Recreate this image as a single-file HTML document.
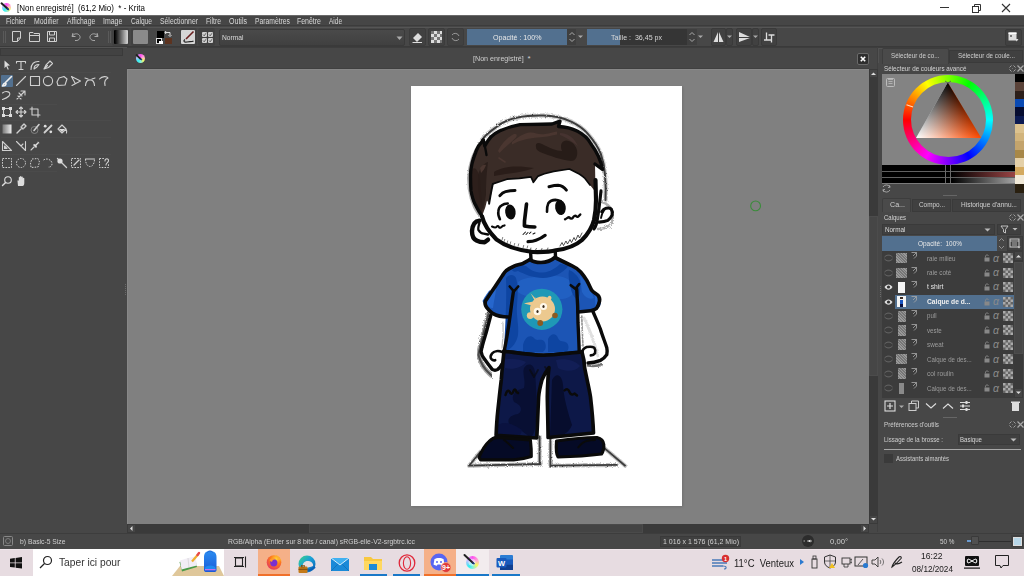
<!DOCTYPE html><html><head><meta charset="utf-8"><style>
html,body{margin:0;padding:0;width:1024px;height:576px;overflow:hidden;background:#474747;font-family:"Liberation Sans", sans-serif;position:relative}
</style></head><body>
<div style="position:absolute;left:0px;top:0px;width:1024px;height:15px;background:#ffffff;"></div><div style="position:absolute;left:1.8px;top:2.8px;width:9.4px;height:9.4px;border-radius:50%;background:conic-gradient(from 0deg,#ff50f0 0deg,#ffb0d0 70deg,#f8f860 120deg,#80f0e0 180deg,#30f0f0 220deg,#c0c0ff 290deg,#ff50f0 360deg)"></div><svg style="position:absolute;left:0px;top:0px;" width="14" height="15" viewBox="0 0 14 15"><path d="M1.5 3.3 L7.6 8.8" stroke="#222" stroke-width="2" stroke-linecap="round"/><path d="M7 8.3 L8.8 9.8" stroke="#1a3a8a" stroke-width="1.6"/></svg><div style="position:absolute;left:16.70px;top:3.79px;font-size:8.4px;line-height:1;color:#000;white-space:nowrap;transform-origin:0 0;transform:scaleX(0.951);">[Non enregistré]&nbsp;&nbsp;(61,2 Mio)&nbsp;&nbsp;* - Krita</div><div style="position:absolute;left:940px;top:7px;width:9px;height:1px;background:#333;"></div><svg style="position:absolute;left:971px;top:3px;" width="10" height="10" viewBox="0 0 10 10"><rect x="1.5" y="3.5" width="6" height="6" fill="none" stroke="#333" stroke-width="1"/><path d="M3.5 3.5 V1.5 H9.5 V7.5 H7.5" fill="none" stroke="#333" stroke-width="1"/></svg><svg style="position:absolute;left:1001px;top:3px;" width="10" height="10" viewBox="0 0 10 10"><path d="M1 1 L9 9 M9 1 L1 9" stroke="#333" stroke-width="1.1"/></svg><div style="position:absolute;left:0px;top:15px;width:1024px;height:1px;background:#6a6a6a;"></div><div style="position:absolute;left:0px;top:16px;width:1024px;height:11px;background:#464646;"></div><div style="position:absolute;left:0px;top:25.3px;width:1024px;height:1px;background:#3c3c3c;"></div><div style="position:absolute;left:5.80px;top:16.57px;font-size:8.3px;line-height:1;color:#d8d8d8;white-space:nowrap;transform-origin:0 0;transform:scaleX(0.803);">Fichier</div><div style="position:absolute;left:33.90px;top:16.57px;font-size:8.3px;line-height:1;color:#d8d8d8;white-space:nowrap;transform-origin:0 0;transform:scaleX(0.833);">Modifier</div><div style="position:absolute;left:66.80px;top:16.57px;font-size:8.3px;line-height:1;color:#d8d8d8;white-space:nowrap;transform-origin:0 0;transform:scaleX(0.818);">Affichage</div><div style="position:absolute;left:103.40px;top:16.57px;font-size:8.3px;line-height:1;color:#d8d8d8;white-space:nowrap;transform-origin:0 0;transform:scaleX(0.837);">Image</div><div style="position:absolute;left:131.00px;top:16.57px;font-size:8.3px;line-height:1;color:#d8d8d8;white-space:nowrap;transform-origin:0 0;transform:scaleX(0.798);">Calque</div><div style="position:absolute;left:160.00px;top:16.57px;font-size:8.3px;line-height:1;color:#d8d8d8;white-space:nowrap;transform-origin:0 0;transform:scaleX(0.824);">Sélectionner</div><div style="position:absolute;left:206.00px;top:16.57px;font-size:8.3px;line-height:1;color:#d8d8d8;white-space:nowrap;transform-origin:0 0;transform:scaleX(0.813);">Filtre</div><div style="position:absolute;left:229.00px;top:16.57px;font-size:8.3px;line-height:1;color:#d8d8d8;white-space:nowrap;transform-origin:0 0;transform:scaleX(0.848);">Outils</div><div style="position:absolute;left:255.00px;top:16.57px;font-size:8.3px;line-height:1;color:#d8d8d8;white-space:nowrap;transform-origin:0 0;transform:scaleX(0.816);">Paramètres</div><div style="position:absolute;left:297.00px;top:16.57px;font-size:8.3px;line-height:1;color:#d8d8d8;white-space:nowrap;transform-origin:0 0;transform:scaleX(0.839);">Fenêtre</div><div style="position:absolute;left:329.00px;top:16.57px;font-size:8.3px;line-height:1;color:#d8d8d8;white-space:nowrap;transform-origin:0 0;transform:scaleX(0.783);">Aide</div><div style="position:absolute;left:0px;top:27px;width:1024px;height:20px;background:#474747;"></div><div style="position:absolute;left:0px;top:27px;width:1024px;height:1px;background:#555555;"></div><div style="position:absolute;left:0px;top:46px;width:1024px;height:1px;background:#3a3a3a;"></div><div style="position:absolute;left:3px;top:31px;width:1px;height:12px;background:#5a5a5a;"></div><div style="position:absolute;left:5px;top:31px;width:1px;height:12px;background:#5a5a5a;"></div><div style="position:absolute;left:108px;top:31px;width:1px;height:12px;background:#5a5a5a;"></div><div style="position:absolute;left:110px;top:31px;width:1px;height:12px;background:#5a5a5a;"></div><svg style="position:absolute;left:11px;top:30px;" width="12" height="13" viewBox="0 0 12 13"><path d="M1.5 1.5 H9.5 V8 L6.5 11.5 H1.5 Z M9.5 8 H6.5 V11.5" fill="none" stroke="#cfcfcf" stroke-width="1"/></svg><svg style="position:absolute;left:28px;top:30px;" width="13" height="13" viewBox="0 0 13 13"><path d="M1.5 2.5 H5 L6 3.5 H11.5 V11.5 H1.5 Z M1.5 5.5 H11.5" fill="none" stroke="#cfcfcf" stroke-width="1"/></svg><svg style="position:absolute;left:46px;top:30px;" width="12" height="13" viewBox="0 0 12 13"><path d="M1.5 1.5 H10.5 V11.5 H1.5 Z M3.5 1.5 V5 H8.5 V1.5 M3.5 11.5 V8 H8.5 V11.5" fill="none" stroke="#cfcfcf" stroke-width="1"/></svg><svg style="position:absolute;left:70px;top:30px;" width="12" height="13" viewBox="0 0 12 13"><path d="M3 3 L2 6.5 L5.5 6.5 M2.5 6 C4 3 9 3 10 6.5 C10.5 9 8 11 5 10.5" fill="none" stroke="#aaa" stroke-width="1"/></svg><svg style="position:absolute;left:88px;top:30px;" width="12" height="13" viewBox="0 0 12 13"><path d="M9 3 L10 6.5 L6.5 6.5 M9.5 6 C8 3 3 3 2 6.5 C1.5 9 4 11 7 10.5" fill="none" stroke="#aaa" stroke-width="1"/></svg><div style="position:absolute;left:112px;top:28px;width:17px;height:18px;background:#414141;border-radius:2px"></div><div style="position:absolute;left:131px;top:28px;width:17px;height:18px;background:#414141;border-radius:2px"></div><div style="position:absolute;left:180px;top:28px;width:17px;height:18px;background:#414141;border-radius:2px"></div><div style="position:absolute;left:198px;top:28px;width:17px;height:18px;background:#414141;border-radius:2px"></div><div style="position:absolute;left:114px;top:30px;width:14px;height:14px;background:linear-gradient(90deg,#000 5%,#cfcfcf 95%);border-radius:1px"></div><div style="position:absolute;left:133px;top:30px;width:14.5px;height:14px;background:#8a8a8a;border-radius:1px"></div><div style="position:absolute;left:157px;top:30.5px;width:7px;height:7px;background:#000;"></div><div style="position:absolute;left:165px;top:37.7px;width:7px;height:6.5px;background:#5c3320;"></div><svg style="position:absolute;left:164px;top:30px;" width="9" height="8" viewBox="0 0 9 8"><path d="M2 1 L1 2.5 L2 4 M1 2.5 H6 V5 M4.5 5 L6 6.5 L7.5 5" fill="none" stroke="#ddd" stroke-width="1"/></svg><div style="position:absolute;left:157px;top:39px;width:4px;height:4px;background:#000;outline:1px solid #ddd"></div><div style="position:absolute;left:159px;top:41px;width:4px;height:3px;background:#fff;"></div><div style="position:absolute;left:181px;top:30px;width:14px;height:14px;background:#d6d6d6;border-radius:1px"></div><svg style="position:absolute;left:181px;top:30px;" width="14" height="14" viewBox="0 0 14 14"><path d="M12.5 1.5 L5 9" stroke="#6a2020" stroke-width="1.6"/><path d="M4 9.5 C2 11 3 12.5 6 12 C9 11.5 11 12 12.5 11" fill="none" stroke="#222" stroke-width="1.2"/></svg><div style="position:absolute;left:201.5px;top:31.5px;width:5px;height:5px;background:#cfcfcf;border-radius:1px"></div><svg style="position:absolute;left:201.5px;top:31.5px;" width="5" height="5" viewBox="0 0 5 5"><path d="M1 2.5 L2.2 3.8 L4 1.2" fill="none" stroke="#444" stroke-width="0.8"/></svg><div style="position:absolute;left:207.5px;top:31.5px;width:5px;height:5px;background:#cfcfcf;border-radius:1px"></div><svg style="position:absolute;left:207.5px;top:31.5px;" width="5" height="5" viewBox="0 0 5 5"><path d="M1 2.5 L2.2 3.8 L4 1.2" fill="none" stroke="#444" stroke-width="0.8"/></svg><div style="position:absolute;left:201.5px;top:37.5px;width:5px;height:5px;background:#cfcfcf;border-radius:1px"></div><svg style="position:absolute;left:201.5px;top:37.5px;" width="5" height="5" viewBox="0 0 5 5"><path d="M1 2.5 L2.2 3.8 L4 1.2" fill="none" stroke="#444" stroke-width="0.8"/></svg><div style="position:absolute;left:207.5px;top:37.5px;width:5px;height:5px;background:#cfcfcf;border-radius:1px"></div><svg style="position:absolute;left:207.5px;top:37.5px;" width="5" height="5" viewBox="0 0 5 5"><path d="M1 2.5 L2.2 3.8 L4 1.2" fill="none" stroke="#444" stroke-width="0.8"/></svg><div style="position:absolute;left:219.4px;top:29px;width:186px;height:17px;background:linear-gradient(#4a4a4a,#404040);border:1px solid #3a3a3a;box-sizing:border-box;border-radius:2px"></div><div style="position:absolute;left:221.50px;top:34.17px;font-size:7.6px;line-height:1;color:#dcdcdc;white-space:nowrap;transform-origin:0 0;transform:scaleX(0.878);">Normal</div><svg style="position:absolute;left:395.5px;top:35.5px;" width="7" height="5" viewBox="0 0 7 5"><path d="M0.5 0.5 H6.5 L3.5 4 Z" fill="#aaa"/></svg><div style="position:absolute;left:409px;top:28px;width:17px;height:18px;background:#414141;border-radius:2px;border:1px solid #3c3c3c;box-sizing:border-box"></div><div style="position:absolute;left:428px;top:28px;width:17px;height:18px;background:#414141;border-radius:2px;border:1px solid #3c3c3c;box-sizing:border-box"></div><div style="position:absolute;left:447px;top:28px;width:17px;height:18px;background:#414141;border-radius:2px;border:1px solid #3c3c3c;box-sizing:border-box"></div><svg style="position:absolute;left:411px;top:31px;" width="13" height="12" viewBox="0 0 13 12"><path d="M2 7 L7 2 L11 6 L6 11 Z" fill="#ddd"/><path d="M1.5 11.5 H11" stroke="#ddd" stroke-width="1"/></svg><svg style="position:absolute;left:430px;top:30px;" width="13" height="14" viewBox="0 0 13 14"><rect x="1" y="1" width="11" height="12" fill="#ddd"/><rect x="1" y="1" width="3" height="3" fill="#777"/><rect x="7" y="1" width="3" height="3" fill="#777"/><rect x="4" y="4" width="3" height="3" fill="#777"/><rect x="10" y="4" width="2" height="3" fill="#777"/><rect x="1" y="7" width="3" height="3" fill="#777"/><rect x="7" y="7" width="3" height="3" fill="#777"/><rect x="4" y="10" width="3" height="3" fill="#777"/><rect x="10" y="10" width="2" height="3" fill="#777"/></svg><svg style="position:absolute;left:449px;top:31px;" width="13" height="12" viewBox="0 0 13 12"><path d="M3 4 A4 4 0 0 1 10 5 M10 8 A4 4 0 0 1 3 7" fill="none" stroke="#999" stroke-width="1"/></svg><div style="position:absolute;left:467px;top:29px;width:100px;height:16px;background:#52708f;"></div><div style="position:absolute;left:492.75px;top:34.00px;font-size:7.8px;line-height:1;color:#e8e8e8;white-space:nowrap;transform-origin:0 0;transform:scaleX(0.909);">Opacité : 100%</div><div style="position:absolute;left:567px;top:29px;width:9px;height:16px;background:#3f3f3f;"></div><svg style="position:absolute;left:568px;top:30px;" width="8" height="14" viewBox="0 0 8 14"><path d="M1.5 5 L4 2.5 L6.5 5 M1.5 9 L4 11.5 L6.5 9" fill="none" stroke="#aaa" stroke-width="1"/></svg><svg style="position:absolute;left:578px;top:35px;" width="5" height="4" viewBox="0 0 5 4"><path d="M0 0.5 H5 L2.5 3 Z" fill="#aaa"/></svg><div style="position:absolute;left:587px;top:29px;width:100px;height:16px;background:#353535;"></div><div style="position:absolute;left:587px;top:29px;width:33px;height:16px;background:#52708f;"></div><div style="position:absolute;left:610.80px;top:34.00px;font-size:7.8px;line-height:1;color:#d8d8d8;white-space:nowrap;transform-origin:0 0;transform:scaleX(0.905);">Taille :&nbsp; 36,45 px</div><div style="position:absolute;left:687px;top:29px;width:10px;height:16px;background:#3f3f3f;"></div><svg style="position:absolute;left:688px;top:30px;" width="8" height="14" viewBox="0 0 8 14"><path d="M1.5 5 L4 2.5 L6.5 5 M1.5 9 L4 11.5 L6.5 9" fill="none" stroke="#aaa" stroke-width="1"/></svg><svg style="position:absolute;left:698px;top:35px;" width="5" height="4" viewBox="0 0 5 4"><path d="M0 0.5 H5 L2.5 3 Z" fill="#aaa"/></svg><div style="position:absolute;left:711px;top:28px;width:15px;height:18px;background:#414141;border-radius:2px;border:1px solid #3a3a3a;box-sizing:border-box"></div><div style="position:absolute;left:726px;top:28px;width:7px;height:18px;background:#414141;border-radius:2px;border:1px solid #3a3a3a;box-sizing:border-box"></div><div style="position:absolute;left:736px;top:28px;width:16px;height:18px;background:#414141;border-radius:2px;border:1px solid #3a3a3a;box-sizing:border-box"></div><div style="position:absolute;left:752px;top:28px;width:7px;height:18px;background:#414141;border-radius:2px;border:1px solid #3a3a3a;box-sizing:border-box"></div><div style="position:absolute;left:761px;top:28px;width:16px;height:18px;background:#414141;border-radius:2px;border:1px solid #3a3a3a;box-sizing:border-box"></div><svg style="position:absolute;left:712px;top:30px;" width="13" height="14" viewBox="0 0 13 14"><path d="M6 2 L1.5 12 H6 Z M7 2 L11.5 12 H7 Z" fill="#ddd"/></svg><svg style="position:absolute;left:738px;top:30px;" width="13" height="14" viewBox="0 0 13 14"><path d="M1 2 L12 7 L1 7 Z M1 8 H12 L1 12 Z" fill="#ddd"/></svg><svg style="position:absolute;left:727px;top:35px;" width="5" height="4" viewBox="0 0 5 4"><path d="M0 0.5 H5 L2.5 3 Z" fill="#aaa"/></svg><svg style="position:absolute;left:753px;top:35px;" width="5" height="4" viewBox="0 0 5 4"><path d="M0 0.5 H5 L2.5 3 Z" fill="#aaa"/></svg><svg style="position:absolute;left:763px;top:30px;" width="13" height="14" viewBox="0 0 13 14"><path d="M3.5 2.5 V10 M1 10 H8.5 M5.5 5 H11.5 M8.5 5 V12.5" fill="none" stroke="#ddd" stroke-width="1.3"/></svg><div style="position:absolute;left:1005px;top:29px;width:17px;height:17px;background:#414141;border-radius:2px;border:1px solid #3a3a3a;box-sizing:border-box"></div><svg style="position:absolute;left:1008px;top:32px;" width="11" height="10" viewBox="0 0 11 10"><rect x="0.5" y="0.5" width="8" height="8" fill="#ddd"/><rect x="0.5" y="0.5" width="8" height="1.5" fill="#fff"/><rect x="2" y="3" width="2" height="2" fill="#777"/><path d="M7 7 L10.5 7 L8.7 9.5 Z" fill="#ddd"/></svg><div style="position:absolute;left:0px;top:47px;width:126px;height:485px;background:#474747;"></div><div style="position:absolute;left:0px;top:46.5px;width:1024px;height:1.5px;background:#545454;"></div><div style="position:absolute;left:0px;top:48px;width:123px;height:8px;background:#424242;border:1px solid #3a3a3a;box-sizing:border-box"></div><div style="position:absolute;left:1px;top:72px;width:110px;height:1px;background:#4b4b4b;"></div><div style="position:absolute;left:1px;top:104px;width:56px;height:1px;background:#4b4b4b;"></div><div style="position:absolute;left:1px;top:120px;width:110px;height:1px;background:#4b4b4b;"></div><div style="position:absolute;left:1px;top:137px;width:110px;height:1px;background:#4b4b4b;"></div><div style="position:absolute;left:1px;top:154px;width:110px;height:1px;background:#4b4b4b;"></div><div style="position:absolute;left:1px;top:171px;width:56px;height:1px;background:#4b4b4b;"></div><div style="position:absolute;left:1px;top:75px;width:12.4px;height:12px;background:#52708f;border-radius:1px"></div><svg style="position:absolute;left:0.8px;top:58.6px;" width="12" height="12" viewBox="0 0 12 12"><path d="M3.5 1.5 L9 6.5 L6.2 6.8 L7.8 10.2 L6.8 10.7 L5.2 7.3 L3.5 9.2 Z" fill="#ddd"/></svg><svg style="position:absolute;left:14.6px;top:58.6px;" width="12" height="12" viewBox="0 0 12 12"><path d="M1.5 2.5 H10.5 M6 2.5 V10.5 M4 10.5 H8 M1.5 2.5 V4 M10.5 2.5 V4" fill="none" stroke="#d0d0d0" stroke-width="1.1" stroke-linecap="round" stroke-linejoin="round"/></svg><svg style="position:absolute;left:28.5px;top:58.6px;" width="12" height="12" viewBox="0 0 12 12"><path d="M2 10.5 C2 5 5 2 10 2.5 M5 10 C5 7 7 5.5 10 5.5 L8 8 Z" fill="none" stroke="#d0d0d0" stroke-width="1.1" stroke-linecap="round" stroke-linejoin="round"/></svg><svg style="position:absolute;left:42.0px;top:58.6px;" width="12" height="12" viewBox="0 0 12 12"><path d="M2 10 L4 6 L8 2 L10.5 4.5 L6.5 8.5 Z M2 10 L5.5 6.5" fill="none" stroke="#d0d0d0" stroke-width="1.1" stroke-linecap="round" stroke-linejoin="round"/></svg><svg style="position:absolute;left:0.8px;top:75.0px;" width="12" height="12" viewBox="0 0 12 12"><path d="M10.5 1.5 L4.5 7.5 M4 8 C2 8.5 2 10.5 1.5 11 C3.5 11 5 10 5 8.5" fill="none" stroke="#eee" stroke-width="1.6" stroke-linecap="round" stroke-linejoin="round"/></svg><svg style="position:absolute;left:14.6px;top:75.0px;" width="12" height="12" viewBox="0 0 12 12"><path d="M1.5 10.5 L10.5 1.5" fill="none" stroke="#d0d0d0" stroke-width="1.1" stroke-linecap="round" stroke-linejoin="round"/></svg><svg style="position:absolute;left:28.5px;top:75.0px;" width="12" height="12" viewBox="0 0 12 12"><path d="M1.5 1.5 H10.5 V10.5 H1.5 Z" fill="none" stroke="#d0d0d0" stroke-width="1.1" stroke-linecap="round" stroke-linejoin="round"/></svg><svg style="position:absolute;left:42.0px;top:75.0px;" width="12" height="12" viewBox="0 0 12 12"><circle cx="6" cy="6" r="4.6" fill="none" stroke="#d0d0d0" stroke-width="1.1"/></svg><svg style="position:absolute;left:56.0px;top:75.0px;" width="12" height="12" viewBox="0 0 12 12"><path d="M3 3 L8 1.5 L11 4 L9 10 L2 10.5 L1 7 Z" fill="none" stroke="#d0d0d0" stroke-width="1.1" stroke-linecap="round" stroke-linejoin="round"/></svg><svg style="position:absolute;left:69.8px;top:75.0px;" width="12" height="12" viewBox="0 0 12 12"><path d="M1.5 1.5 L10.5 6 L2 10.5 M1.5 1.5 L5 8" fill="none" stroke="#d0d0d0" stroke-width="1.1" stroke-linecap="round" stroke-linejoin="round"/></svg><svg style="position:absolute;left:84.0px;top:75.0px;" width="12" height="12" viewBox="0 0 12 12"><path d="M1.5 10.5 C2 3 10 3 10.5 10.5 M1 3 L4 4 M11 3 L8 4" fill="none" stroke="#d0d0d0" stroke-width="1.1" stroke-linecap="round" stroke-linejoin="round"/></svg><svg style="position:absolute;left:98.0px;top:75.0px;" width="12" height="12" viewBox="0 0 12 12"><path d="M1.5 4 C4 1 9 1 10 3 C8 4 6 6 7 10 M7 10.5 L7 10" fill="none" stroke="#d0d0d0" stroke-width="1.1" stroke-linecap="round" stroke-linejoin="round"/></svg><svg style="position:absolute;left:0.8px;top:89.0px;" width="12" height="12" viewBox="0 0 12 12"><path d="M1.5 4 C5 1 11 3 8 7 C6 9 3 10 1.5 10.5" fill="none" stroke="#d0d0d0" stroke-width="1.1" stroke-linecap="round" stroke-linejoin="round"/></svg><svg style="position:absolute;left:14.6px;top:89.0px;" width="12" height="12" viewBox="0 0 12 12"><path d="M2 10 L10 2 M6 2 H10 V6 M4 4 L7 7 M3 7 L6 10" fill="none" stroke="#d0d0d0" stroke-width="1.1" stroke-linecap="round" stroke-linejoin="round"/></svg><svg style="position:absolute;left:0.8px;top:106.0px;" width="12" height="12" viewBox="0 0 12 12"><path d="M2.5 2.5 H9.5 V9.5 H2.5 Z" fill="none" stroke="#d0d0d0" stroke-width="1.1" stroke-linecap="round" stroke-linejoin="round"/><rect x="1" y="1" width="3" height="3" fill="#ddd"/><rect x="8" y="1" width="3" height="3" fill="#ddd"/><rect x="1" y="8" width="3" height="3" fill="#ddd"/><rect x="8" y="8" width="3" height="3" fill="#ddd"/></svg><svg style="position:absolute;left:14.6px;top:106.0px;" width="12" height="12" viewBox="0 0 12 12"><path d="M6 1 V11 M1 6 H11 M4.5 2.5 L6 1 L7.5 2.5 M4.5 9.5 L6 11 L7.5 9.5 M2.5 4.5 L1 6 L2.5 7.5 M9.5 4.5 L11 6 L9.5 7.5" fill="none" stroke="#d0d0d0" stroke-width="1.1" stroke-linecap="round" stroke-linejoin="round"/></svg><svg style="position:absolute;left:28.5px;top:106.0px;" width="12" height="12" viewBox="0 0 12 12"><path d="M3 1 V9 H11 M1 3 H9 V11" fill="none" stroke="#d0d0d0" stroke-width="1.1" stroke-linecap="round" stroke-linejoin="round"/></svg><svg style="position:absolute;left:0.8px;top:123.0px;" width="12" height="12" viewBox="0 0 12 12"><rect x="1.5" y="1.5" width="9" height="9" fill="url(#tg)"/><defs><linearGradient id="tg"><stop offset="0" stop-color="#777"/><stop offset="1" stop-color="#eee"/></linearGradient></defs></svg><svg style="position:absolute;left:14.6px;top:123.0px;" width="12" height="12" viewBox="0 0 12 12"><path d="M2 10 L7 5 M6 4 L8 6 M7 3 L9 1 L11 3 L9 5" fill="none" stroke="#d0d0d0" stroke-width="1.4" stroke-linecap="round" stroke-linejoin="round"/></svg><svg style="position:absolute;left:28.5px;top:123.0px;" width="12" height="12" viewBox="0 0 12 12"><circle cx="5.5" cy="7" r="3.5" fill="none" stroke="#888" stroke-width="0.9"/><path d="M10 1.5 L5 7.5" fill="none" stroke="#d0d0d0" stroke-width="1.6" stroke-linecap="round" stroke-linejoin="round"/></svg><svg style="position:absolute;left:42.0px;top:123.0px;" width="12" height="12" viewBox="0 0 12 12"><path d="M2.5 9.5 L9.5 2.5" fill="none" stroke="#d0d0d0" stroke-width="1.8" stroke-linecap="round" stroke-linejoin="round"/><circle cx="3.2" cy="3.2" r="1.4" fill="#ddd"/><circle cx="8.8" cy="8.8" r="1.4" fill="#ddd"/></svg><svg style="position:absolute;left:56.0px;top:123.0px;" width="12" height="12" viewBox="0 0 12 12"><path d="M2 6 L6 2 L10 6 L6 10 Z M10 6 C11 8 11 9 10.5 10" fill="none" stroke="#d0d0d0" stroke-width="1.1" stroke-linecap="round" stroke-linejoin="round"/><path d="M3 6 H9 L6 9 Z" fill="#ddd"/></svg><svg style="position:absolute;left:0.8px;top:140.0px;" width="12" height="12" viewBox="0 0 12 12"><path d="M1.5 10.5 L1.5 1.5 L10.5 10.5 Z M3.5 8.5 L3.5 6 L6 8.5 Z" fill="none" stroke="#d0d0d0" stroke-width="1.1" stroke-linecap="round" stroke-linejoin="round"/></svg><svg style="position:absolute;left:14.6px;top:140.0px;" width="12" height="12" viewBox="0 0 12 12"><path d="M1.5 1.5 L10.5 10.5 V1.5 M6 6 L8 4" fill="none" stroke="#d0d0d0" stroke-width="1.1" stroke-linecap="round" stroke-linejoin="round"/></svg><svg style="position:absolute;left:28.5px;top:140.0px;" width="12" height="12" viewBox="0 0 12 12"><path d="M2 10 L5 7" fill="none" stroke="#d0d0d0" stroke-width="1.1" stroke-linecap="round" stroke-linejoin="round"/><path d="M4 5 L7 8 L8 7 L7.5 5.5 L10 3 L11 3.5 L8.5 1 L9 2 L6.5 4.5 L5 4 Z" fill="#ddd"/></svg><svg style="position:absolute;left:0.8px;top:157.0px;" width="12" height="12" viewBox="0 0 12 12"><path d="M1.5 1.5 H10.5 V10.5 H1.5 Z" fill="none" stroke="#d0d0d0" stroke-width="1" stroke-dasharray="1.6 1.2"/></svg><svg style="position:absolute;left:14.6px;top:157.0px;" width="12" height="12" viewBox="0 0 12 12"><circle cx="6" cy="6" r="4.5" fill="none" stroke="#d0d0d0" stroke-width="1" stroke-dasharray="1.6 1.2"/></svg><svg style="position:absolute;left:28.5px;top:157.0px;" width="12" height="12" viewBox="0 0 12 12"><path d="M3 2 L9 1.5 L10.5 5 L9 10 L2 10.5 L1.5 6 Z" fill="none" stroke="#d0d0d0" stroke-width="1" stroke-dasharray="1.6 1.2"/></svg><svg style="position:absolute;left:42.0px;top:157.0px;" width="12" height="12" viewBox="0 0 12 12"><path d="M1.5 3 C4 1 9 2 10 6 C10.5 9 8 10.5 6 10" fill="none" stroke="#d0d0d0" stroke-width="1" stroke-dasharray="1.6 1.2"/></svg><svg style="position:absolute;left:56.0px;top:157.0px;" width="12" height="12" viewBox="0 0 12 12"><path d="M1.5 1.5 L10.5 10.5" fill="none" stroke="#d0d0d0" stroke-width="1.3" stroke-linecap="round" stroke-linejoin="round"/><circle cx="4" cy="4" r="2.6" fill="#ddd"/></svg><svg style="position:absolute;left:69.8px;top:157.0px;" width="12" height="12" viewBox="0 0 12 12"><path d="M1.5 1.5 H10.5 V10.5 H1.5 Z" fill="none" stroke="#d0d0d0" stroke-width="1" stroke-dasharray="1.6 1.2"/><path d="M4 8 L9 3" fill="none" stroke="#d0d0d0" stroke-width="1.3" stroke-linecap="round" stroke-linejoin="round"/></svg><svg style="position:absolute;left:84.0px;top:157.0px;" width="12" height="12" viewBox="0 0 12 12"><path d="M1.5 2 C1.5 12 10.5 12 10.5 2" fill="none" stroke="#d0d0d0" stroke-width="1" stroke-dasharray="1.6 1.2"/><path d="M1.5 2 H10.5" fill="none" stroke="#d0d0d0" stroke-width="1.1" stroke-linecap="round" stroke-linejoin="round"/></svg><svg style="position:absolute;left:98.0px;top:157.0px;" width="12" height="12" viewBox="0 0 12 12"><path d="M1.5 1.5 H7 M1.5 1.5 V10.5 H10.5 V7" fill="none" stroke="#d0d0d0" stroke-width="1" stroke-dasharray="1.6 1.2"/><path d="M7 4 C7 1 11 1 10.5 4 C10 6 8 6 8 8" fill="none" stroke="#d0d0d0" stroke-width="1.1" stroke-linecap="round" stroke-linejoin="round"/></svg><svg style="position:absolute;left:0.8px;top:174.7px;" width="12" height="12" viewBox="0 0 12 12"><circle cx="7" cy="5" r="3.3" fill="none" stroke="#ddd" stroke-width="1.1"/><path d="M4.6 7.4 L1.5 10.5" fill="none" stroke="#ddd" stroke-width="1.4" stroke-linecap="round" stroke-linejoin="round"/></svg><svg style="position:absolute;left:14.6px;top:174.7px;" width="12" height="12" viewBox="0 0 12 12"><path d="M3 11 L2.5 6 C2.3 5 3.5 4.8 3.8 6 V2.5 C3.8 1.5 5 1.5 5 2.5 V5 V1.8 C5 0.8 6.4 0.8 6.4 1.8 V5 V2.2 C6.4 1.2 7.8 1.2 7.8 2.2 V5.5 V3.5 C7.8 2.6 9.3 2.6 9.3 3.5 V8 C9.3 10 8.5 11 7.5 11 Z" fill="#ddd"/></svg><div style="position:absolute;left:127px;top:47px;width:751px;height:22px;background:#474747;"></div><div style="position:absolute;left:127px;top:47px;width:751px;height:1px;background:#3d3d3d;"></div><div style="position:absolute;left:877px;top:47px;width:0.8px;height:485px;background:#404040;"></div><div style="position:absolute;left:135.8px;top:53.7px;width:9px;height:9px;border-radius:50%;background:conic-gradient(from 0deg,#ff50f0 0deg,#ffb0d0 70deg,#f8f860 120deg,#80f0e0 180deg,#30f0f0 220deg,#c0c0ff 290deg,#ff50f0 360deg)"></div><svg style="position:absolute;left:130px;top:50px;" width="16" height="16" viewBox="0 0 16 16"><path d="M6.5 5 L10.5 8.8" stroke="#222" stroke-width="1.8" stroke-linecap="round"/><path d="M10.5 8.8 L12 10" stroke="#1a3a8a" stroke-width="1.4"/></svg><div style="position:absolute;left:472.70px;top:54.83px;font-size:8px;line-height:1;color:#cfcfcf;white-space:nowrap;transform-origin:0 0;transform:scaleX(0.893);">[Non enregistré]</div><div style="position:absolute;left:527.50px;top:54.83px;font-size:8px;line-height:1;color:#cfcfcf;white-space:nowrap;">*</div><div style="position:absolute;left:857px;top:53px;width:12px;height:12px;background:#2e2e2e;border:1px solid #6a6a6a;border-radius:2px;box-sizing:border-box"></div><svg style="position:absolute;left:857px;top:53px;" width="12" height="12" viewBox="0 0 12 12"><path d="M3.8 3.8 L8.2 8.2 M8.2 3.8 L3.8 8.2" stroke="#fff" stroke-width="1.6"/></svg><div style="position:absolute;left:127px;top:68px;width:742px;height:1px;background:#404040;"></div><div style="position:absolute;left:127px;top:69px;width:742px;height:454.5px;background:#808080;border-top:1px solid #888;border-left:1px solid #888;box-sizing:border-box"></div><div style="position:absolute;left:869px;top:69px;width:8.5px;height:454px;background:#3a3a3a;"></div><div style="position:absolute;left:869px;top:69px;width:8.5px;height:9px;background:#454545;border:1px solid #3a3a3a;box-sizing:border-box"></div><svg style="position:absolute;left:869px;top:69px;" width="9" height="9" viewBox="0 0 9 9"><path d="M2 6 L4.5 3.5 L7 6 Z" fill="#ddd"/></svg><div style="position:absolute;left:869px;top:515px;width:8.5px;height:8.5px;background:#454545;border:1px solid #3a3a3a;box-sizing:border-box"></div><svg style="position:absolute;left:869px;top:515px;" width="9" height="9" viewBox="0 0 9 9"><path d="M2 3 L4.5 5.5 L7 3 Z" fill="#ddd"/></svg><div style="position:absolute;left:869px;top:216px;width:8.5px;height:160px;background:#464646;border:1px solid #4c4c4c;box-sizing:border-box"></div><div style="position:absolute;left:127px;top:523.5px;width:742px;height:9px;background:#3a3a3a;"></div><div style="position:absolute;left:309px;top:523.5px;width:334px;height:9px;background:#444444;border:1px solid #4a4a4a;box-sizing:border-box"></div><div style="position:absolute;left:127px;top:523.5px;width:9px;height:9px;background:#454545;border:1px solid #3a3a3a;box-sizing:border-box"></div><svg style="position:absolute;left:127px;top:523.5px;" width="9" height="9" viewBox="0 0 9 9"><path d="M5.5 2 L3 4.5 L5.5 7 Z" fill="#ddd"/></svg><div style="position:absolute;left:860px;top:523.5px;width:9px;height:9px;background:#454545;border:1px solid #3a3a3a;box-sizing:border-box"></div><svg style="position:absolute;left:860px;top:523.5px;" width="9" height="9" viewBox="0 0 9 9"><path d="M3.5 2 L6 4.5 L3.5 7 Z" fill="#ddd"/></svg><div style="position:absolute;left:412px;top:87px;width:271px;height:420px;background:#707070;filter:blur(1px)"></div><div style="position:absolute;left:411px;top:86px;width:271px;height:420px;background:#ffffff;"></div><svg style="position:absolute;left:748px;top:198px;" width="16" height="16" viewBox="0 0 16 16"><circle cx="7.6" cy="7.9" r="4.9" fill="none" stroke="#3a8c3a" stroke-width="1.1"/></svg><svg style="position:absolute;left:411px;top:86px;" width="271" height="420" viewBox="411 86 271 420"><defs><filter id="rough" x="-5%" y="-5%" width="110%" height="110%"><feTurbulence type="fractalNoise" baseFrequency="0.8" numOctaves="2" seed="3"/><feDisplacementMap in="SourceGraphic" scale="2.2"/></filter><filter id="rough2" x="-5%" y="-5%" width="110%" height="110%"><feTurbulence type="fractalNoise" baseFrequency="1.6" numOctaves="1" seed="7"/><feDisplacementMap in="SourceGraphic" scale="4"/></filter></defs><g fill="none" stroke="#222" stroke-opacity="0.75" stroke-linecap="round" filter="url(#rough)"><path d="M482 140 C486 134 491 131 496.7 126.7 C503 122 510 119 517.6 117.6 C525 116 535 115.5 542 115.6 C555 115.4 563 118 571.7 121.9 C578 125 584 129 588.3 134.4 C594 141 598 147 600.8 153.8 C603 160 604.5 168 605 174.7 L605.7 188 L605.5 200" stroke-width="2" stroke-opacity="0.9"/><path d="M482 140 C486 134 491 131 496.7 126.7 C503 122 510 119 517.6 117.6 C525 116 535 115.5 542 115.6 C555 115.4 563 118 571.7 121.9 C578 125 584 129 588.3 134.4 C594 141 598 147 600.8 153.8 C603 160 604.5 168 605 174.7 L605.7 188 L605.5 200" stroke-width="4.5" stroke-opacity="0.25" stroke="#444" filter="url(#rough2)"/><path d="M481 142 C474 150 469 163 468 178 C468 195 472 206 479 216" stroke-width="2" stroke-opacity="0.35"/><path d="M601.7 202 C606 203 610 205 613 212 C613.5 218 612 222 610.4 224.7 C606 228 602 229 598 229" stroke-width="2.4" stroke-opacity="0.35" filter="url(#rough2)"/><path d="M488.5 314 C485.5 327 481 341 478.5 355 C480.5 363 485 370 491 375" stroke-width="2.2" stroke-opacity="0.7"/><path d="M488.5 314 C485.5 327 481 341 478.5 355 C480.5 363 485 370 491 375" stroke-width="5" stroke-opacity="0.4" stroke="#222" filter="url(#rough2)"/><path d="M503 322 C503.5 330 503 340 502 348" stroke-width="1.2" stroke-opacity="0.3"/><path d="M581.8 316 C582 326 582.5 336 583 346" stroke-width="1.6" stroke-opacity="0.5" stroke-dasharray="2 1.5"/><path d="M588 365.5 C593 367 598 366 602 364" stroke-width="2" stroke-opacity="0.5"/><path d="M588 365.5 C593 367 598 366 602 364" stroke-width="4.5" stroke-opacity="0.3" stroke="#333" filter="url(#rough2)"/><path d="M584 318 C590 330 595 345 598 356" stroke-width="3" stroke-opacity="0.12" filter="url(#rough2)"/><path d="M469 465.7 L540.4 464 M469 465.7 L480.6 451.6 M539.6 436.6 L539.6 464 M550.4 436.6 L550.4 466.5 M550.4 465.7 L616.8 464.9 M603.5 447.4 L625.1 465.7" stroke-width="1.8" stroke-opacity="0.85"/><path d="M469 465.7 L540.4 464 M469 465.7 L480.6 451.6 M539.6 436.6 L539.6 464 M550.4 436.6 L550.4 466.5 M550.4 465.7 L616.8 464.9 M603.5 447.4 L625.1 465.7" stroke-width="4" stroke-opacity="0.3" stroke="#333" filter="url(#rough2)"/></g><path d="M483.3 140.1 L484.8 145.8 C487 142 489 139 490.8 137 C494 134 497 132 500 130.7 C507 127.5 513 125.8 520 124.6 L542 124.3 L552 124 L560 121.2 L558.5 126.5 C572 127 585 133 591 144 C597 152 601 160 602.5 169.5 L595 164 L595.5 192 L590 185 L585 178.4 C582 176 580.5 174.5 578.75 173.75 L569.4 169 L553.75 171.4 L544.4 173.75 L538.1 176.1 L533.4 182.3 L531 176.9 L519.4 178.4 L506.9 179.2 L492.8 183.9 L491.2 194.4 L489.1 203.75 L487 200.6 L485.4 206.9 L482 216.3 C476 210 471 200 470.5 190 C470 180 471 170 472 163.5 C473 158 475 153 478 147 Z" fill="#3a2c27" stroke="none" stroke-width="0.00" stroke-linecap="round" stroke-linejoin="round" /><path d="M498 151 C501 144 507 138 513 134.5 C516.5 133 518 135 515.5 138 C511 142.5 505 147 499.5 153 Z" fill="#4a3630" stroke="none" stroke-width="0.00" stroke-linecap="round" stroke-linejoin="round" /><path d="M512 142 C518 137 524 133 530 132.5 C535 132 538 135 545 134 C550 133.5 553 132 557 131.5 L557 134.5 C550 136 545 137 538 137.5 C530 138 520 140 512 144.5 Z" fill="#4a3630" stroke="none" stroke-width="0.00" stroke-linecap="round" stroke-linejoin="round" /><path d="M499 158 L505 162" fill="none" stroke="#4a3630" stroke-width="1.56" stroke-linecap="round" stroke-linejoin="round" /><path d="M560 133 C568 133 574 138 578 146 C575 144 568 138 560 135 Z" fill="#463330" stroke="none" stroke-width="0.00" stroke-linecap="round" stroke-linejoin="round" /><path d="M478 175 C480 168 484 163 488 162 C487 170 486 180 486 195 C485 200 484 206 483 210 C479 200 477 188 478 175 Z" fill="#2b1f1b" stroke="none" stroke-width="0.00" stroke-linecap="round" stroke-linejoin="round" /><path d="M480 168 C482 165 484 164 486 165 C485 168 483 171 481 173 Z" fill="#4a3630" stroke="none" stroke-width="0.00" stroke-linecap="round" stroke-linejoin="round" /><path d="M536 147 C535 143 538 142 542 144 C550 148 556 151 562 151 C560 146 561 141 566 140.5 C571 140.5 575 144 577 150 C578 156 576 161 571 161 C562 160 550 156 540 152 C537 150.5 536 149 536 147 Z" fill="#271c18" stroke="none" stroke-width="0.00" stroke-linecap="round" stroke-linejoin="round" /><path d="M494 172 C505 165 520 166 534 168 C525 172 510 173 494 176 Z" fill="#2a1d19" stroke="none" stroke-width="0.00" stroke-linecap="round" stroke-linejoin="round" /><path d="M470 172 C474 165 478 168 480 180 C481 195 483 205 482 214 C476 205 471 190 470 172 Z" fill="#2a1d19" stroke="none" stroke-width="0.00" stroke-linecap="round" stroke-linejoin="round" opacity="0.8"/><path d="M483.3 140.1 L484.8 145.8 C487 142 489 139 490.8 137 C494 134 497 132 500 130.7 C507 127.5 513 125.8 520 124.6 L542 124.3 L552 124 L560 121.2 L558.5 126.5 C572 127 585 133 591 144 C597 152 601 160 602.5 169.5 L595 164" fill="none" stroke="#0a0a0a" stroke-width="3.38" stroke-linecap="round" stroke-linejoin="round" /><path d="M483.3 140.1 C481 143 479.5 145 478.5 146 C477 149 476 151 475.6 152.5 C474 156 473 160 472 163.5 C471 168 470.5 172 470.5 175 C470.5 182 470.6 186 471 191 C472 196 473 200 475 204 C477 208 479 212 481 214.5 L482 216.3" fill="none" stroke="#0a0a0a" stroke-width="3.38" stroke-linecap="round" stroke-linejoin="round" /><path d="M484.8 146 C485.5 149 486 152 486.5 155" fill="none" stroke="#0a0a0a" stroke-width="2.34" stroke-linecap="round" stroke-linejoin="round" /><path d="M492.8 183.9 L506.9 179.2 L519.4 178.4 L531 176.9 L533.4 182.3 L538.1 176.1 L544.4 173.75 L553.75 171.4 L569.4 169 L578.75 173.75 C580.5 174.5 582 176 585 178.4 L590 185" fill="none" stroke="#0a0a0a" stroke-width="1.69" stroke-linecap="round" stroke-linejoin="round" /><path d="M482 216.3 C484 225 489 232 496.7 239.7 C505 246 516 250 532.6 252 C545 252.3 552 251.5 556 250.3 C566 249 575 246.2 582 240 C588 234 592 228 594 220 C595.5 213 596 206 596 200 L595.5 180" fill="none" stroke="#0a0a0a" stroke-width="4.16" stroke-linecap="round" stroke-linejoin="round" /><path d="M601 190.8 C600 200 599 210 597.5 218 C597 223 596 226 594 229" fill="none" stroke="#0a0a0a" stroke-width="3.12" stroke-linecap="round" stroke-linejoin="round" /><path d="M492.8 183.9 C491.5 190 490 198 489.1 203.75" fill="none" stroke="#0a0a0a" stroke-width="1.95" stroke-linecap="round" stroke-linejoin="round" /><path d="M479.4 220.6 C475 221 472.5 225 472 231 C472 236 474 239.5 476.8 240.6 C479 242 482 242.3 484.6 242.3 L488 239.7" fill="none" stroke="#0a0a0a" stroke-width="4.42" stroke-linecap="round" stroke-linejoin="round" /><path d="M479.4 223.2 C478.5 226 478 229 478.5 230.2 C480 232.5 482 233.6 483.7 233.6 L488 234.5" fill="none" stroke="#0a0a0a" stroke-width="2.34" stroke-linecap="round" stroke-linejoin="round" /><path d="M601.7 211.7 C603 209.5 604.5 208.5 606 208.2 C608.5 207.8 610.5 208 611.25 209.1 C612.5 211 612.5 213 612.1 215.2 C611 217.5 609.5 219.5 607.8 220.4 C605 221.8 602 222 599.1 222.1" fill="none" stroke="#0a0a0a" stroke-width="3.12" stroke-linecap="round" stroke-linejoin="round" /><path d="M601 218 C601.5 215 602.5 212.5 604 210.5" fill="none" stroke="#0a0a0a" stroke-width="1.82" stroke-linecap="round" stroke-linejoin="round" /><path d="M499.9 195.7 C502 193 504 192 505.6 191.6 C509 190.8 512 190.5 515 190.5" fill="none" stroke="#0a0a0a" stroke-width="2.99" stroke-linecap="round" stroke-linejoin="round" /><path d="M549 186.7 C552 186 555 185.3 558 185.3 C561 185.5 564 187 566.4 190.1" fill="none" stroke="#0a0a0a" stroke-width="2.99" stroke-linecap="round" stroke-linejoin="round" /><path d="M499.9 219.2 C498.5 216 498 213.5 498.3 211.9 C498.5 208.5 499.5 206.5 501.5 205.6 C503.5 204 505.5 203.5 507.7 203.5" fill="none" stroke="#0a0a0a" stroke-width="2.60" stroke-linecap="round" stroke-linejoin="round" /><ellipse cx="510.4" cy="212" rx="5.2" ry="7.6" fill="#0a0a0a" transform="rotate(-8 510.6 212)"/><path d="M547 211.7 C547 208 547.5 205 548.3 203.3 C550 201 552.5 200 555.3 199.9 C557.5 200 559 200.5 560.8 201.25" fill="none" stroke="#0a0a0a" stroke-width="2.60" stroke-linecap="round" stroke-linejoin="round" /><ellipse cx="560.5" cy="207.5" rx="5.3" ry="7.6" fill="#0a0a0a" transform="rotate(-10 560.3 207.8)"/><path d="M526.5 204.1 C525.8 210 525 217 524.5 221 L524.4 225.9 C527 226.5 531 227 534.8 227" fill="none" stroke="#0a0a0a" stroke-width="3.64" stroke-linecap="round" stroke-linejoin="round" /><path d="M528 241.6 C531 241.5 534 241 536 240.2 C539.5 239 542.5 237.5 545.2 235.3" fill="none" stroke="#0a0a0a" stroke-width="3.12" stroke-linecap="round" stroke-linejoin="round" /><path d="M492 226.5 C494 227.5 495.5 228 496.5 227 C497.5 225.5 498.5 226 499 227.2 C500 228.3 501.5 227.5 502.5 226 L504.6 225.4" fill="none" stroke="#0a0a0a" stroke-width="2.08" stroke-linecap="round" stroke-linejoin="round" /><path d="M565 219.3 C567 218.5 568.5 216.5 569.5 217.5 C570.5 219 572 219 573 217.5 C574 215.5 575.5 215.3 576.5 216.5 C577.5 217.5 579 216 580.3 214.4" fill="none" stroke="#0a0a0a" stroke-width="2.34" stroke-linecap="round" stroke-linejoin="round" /><path d="M523 234.5 L525.5 232 M526 234.5 L528 232.5 M529.5 233.5 L531 232 M533 234 L535 233" fill="none" stroke="#0a0a0a" stroke-width="1.04" stroke-linecap="round" stroke-linejoin="round" /><g stroke="#222" stroke-width="0.8" stroke-opacity="0.7"><path d="M502 240 L502.8 237"/><path d="M504 242 L504.8 239"/><path d="M507 243.5 L507.8 240.5"/><path d="M510 244.5 L510.8 241.5"/><path d="M514 246 L514.8 243"/><path d="M518 246.5 L518.8 243.5"/><path d="M523 248 L523.8 245"/><path d="M527 248.5 L527.8 245.5"/></g><path d="M560 246 L562 242.5 L563.5 245.5 L566 241 L567.5 244 L570 239.5 L571.5 242.5 L574 237.5 L575.5 240.5 L578 235 L579.5 238 L582 233" fill="none" stroke="#222" stroke-width="0.98" stroke-linecap="round" stroke-linejoin="round" opacity="0.8"/><path d="M530 250 L531 248 M535 250.5 L536.5 248.5 M541 250.5 L542 248.5 M547 250 L548 248" fill="none" stroke="#222" stroke-width="1.04" stroke-linecap="round" stroke-linejoin="round" opacity="0.6"/><path d="M530.6 252.5 L531 259" fill="none" stroke="#0a0a0a" stroke-width="3.38" stroke-linecap="round" stroke-linejoin="round" /><path d="M555.3 251.5 L555.5 257" fill="none" stroke="#0a0a0a" stroke-width="3.38" stroke-linecap="round" stroke-linejoin="round" /><path d="M523 263.4 L530 259.5 C533 262 537 262.5 541 262.5 C547 262.5 552 260 556 258 C562 261 567 263.5 572.2 265.8 C576 267.5 578.5 269.5 580.7 271.9 C583 274.5 585 277.5 586.8 280.4 C588.5 283.5 590 287 591.6 290.1 C593.5 292.5 596 293.5 597.7 295 C599.5 297 600 299 599.5 301.1 C599 304 598 306.5 596.5 308.4 C594.5 310 592.5 310.6 590.4 310.8 L578.2 312 L580.5 352 C565 353 550 354 542 353.7 L503.9 351.9 L508.4 317 C502 317 497 316 492.6 313.4 C490 311.5 488 309.5 486.5 307.3 C485.2 305.5 484.8 303.5 485.3 301.2 C487.5 298 490 294 492.6 290.3 C496 285.5 499 280.5 502.3 275.7 C503.5 274 504.5 272 506 270.8 C508.5 269 511 267.5 514.5 266 C517 265 519.5 264.5 523 263.4 Z" fill="#1c55b5" stroke="none" stroke-width="0.00" stroke-linecap="round" stroke-linejoin="round" /><path d="M482.5 301 C485 296 488 292 490 290 L489 306 C486 306 483.5 304 482.5 301 Z" fill="#2060c4" stroke="none" stroke-width="0.00" stroke-linecap="round" stroke-linejoin="round" /><path d="M518 282 C525 276 540 277 555 276 C565 276 572 280 574 288 C574 296 568 300 555 299 C540 298 525 298 518 292 Z" fill="#2363c6" stroke="none" stroke-width="0.00" stroke-linecap="round" stroke-linejoin="round" opacity="0.8"/><path d="M580 276 C586 282 591 290 594 298 C590 300 585 298 582 292 Z" fill="#2363c6" stroke="none" stroke-width="0.00" stroke-linecap="round" stroke-linejoin="round" /><path d="M512 270 C518 266 522 265 526 266 C530 270 536 273 543 272.5 C550 272 556 268 560 264 C563 264 566 265 568 266.5 C563 273 553 278 543 278 C533 278 524 274 518 271 C515 272 513 272 512 270 Z" fill="#0e45a2" stroke="none" stroke-width="0.00" stroke-linecap="round" stroke-linejoin="round" /><path d="M506 278 C509 274 514 274 516 278 C518 285 518 295 517 305 C516 315 519 325 518 335 C517 342 512 348 508 350 L504 350 C505 330 507 300 506 278 Z" fill="#0e45a2" stroke="none" stroke-width="0.00" stroke-linecap="round" stroke-linejoin="round" /><path d="M523 345 C525 337 530 334 534 338 C537 342 540 338 544 341 C547 345 546 350 543 352 L523 352 Z" fill="#0e45a2" stroke="none" stroke-width="0.00" stroke-linecap="round" stroke-linejoin="round" /><path d="M548 339 C551 333 556 333 558 338 C560 343 564 340 567 343 C570 347 568 351 566 352 L548 352 Z" fill="#0e45a2" stroke="none" stroke-width="0.00" stroke-linecap="round" stroke-linejoin="round" /><path d="M569 270 C574 272 578 276 580 281 C581 288 580 295 578 300 C574 298 571 292 570 285 C569 280 568 275 569 270 Z" fill="#0e45a2" stroke="none" stroke-width="0.00" stroke-linecap="round" stroke-linejoin="round" /><path d="M486 302 C489 292 494 286 497 283 C496 292 494 300 493 308 C490 308 487 306 486 302 Z" fill="#2666cc" stroke="none" stroke-width="0.00" stroke-linecap="round" stroke-linejoin="round" /><path d="M594 292 C598 296 601 299 601 303 C600 307 598 309 595 310 C596 304 595 298 594 292 Z" fill="#2666cc" stroke="none" stroke-width="0.00" stroke-linecap="round" stroke-linejoin="round" /><circle cx="541.8" cy="309.3" r="20.6" fill="#1f98b6"/><circle cx="542.5" cy="309" r="12.5" fill="#ecc98f"/><path d="M524 303.5 C529 302 534 301.5 537 302 L540 307 C535 306 529 305 524 303.5 Z" fill="#ecc98f" stroke="none" stroke-width="0.00" stroke-linecap="round" stroke-linejoin="round" /><path d="M530.5 293.3 C532 296 534 299 535.5 302.5 L538.5 302 C536 299 533 296 530.5 293.3 Z" fill="#ecc98f" stroke="none" stroke-width="0.00" stroke-linecap="round" stroke-linejoin="round" /><path d="M535 297.5 C536.5 299 538 300.5 539 302 L541 301 C539 299.5 537 298 535 297.5 Z" fill="#ecc98f" stroke="none" stroke-width="0.00" stroke-linecap="round" stroke-linejoin="round" /><path d="M547 299 C548 295 551 295 551.5 298 L550 303 Z" fill="#ecc98f" stroke="none" stroke-width="0.00" stroke-linecap="round" stroke-linejoin="round" /><circle cx="530.2" cy="315.6" r="3.4" fill="#ecc98f"/><circle cx="537.5" cy="311.5" r="3.8" fill="#fff8ea"/><circle cx="543.5" cy="306.5" r="3.6" fill="#fff8ea"/><ellipse cx="537.5" cy="311.5" rx="1.1" ry="1.6" fill="#3a2a1a"/><ellipse cx="543.5" cy="306.5" rx="1.1" ry="1.6" fill="#3a2a1a"/><circle cx="540.2" cy="323" r="2.9" fill="#8a5a22"/><circle cx="555" cy="315.5" r="2.8" fill="#8a5a22"/><path d="M530 259.5 C533 262 537 262.5 541 262.5 C547 262.5 552 260 555.5 257 M556 258 C562 261 567 263.5 572.2 265.8 C576 267.5 578.5 269.5 580.7 271.9 C583 274.5 585 277.5 586.8 280.4 C588.5 283.5 590 287 591.6 290.1 C593.5 292.5 596 293.5 597.7 295 C599.5 297 600 299 599.5 301.1 C599 304 598 306.5 596.5 308.4 C594.5 310 592.5 310.6 590.4 310.8 L578.2 312" fill="none" stroke="#0a0a0a" stroke-width="3.64" stroke-linecap="round" stroke-linejoin="round" /><path d="M530 259.5 L523 263.4 C519.5 264.5 517 265 514.5 266 C511 267.5 508.5 269 506 270.8 C504.5 272 503.5 274 502.3 275.7 C499 280.5 496 285.5 492.6 290.3 C490 294 487.5 298 485.3 301.2 C484.8 303.5 485.2 305.5 486.5 307.3 C488 309.5 490 311.5 492.6 313.4 C497 316 502 317 508.4 317" fill="none" stroke="#0a0a0a" stroke-width="3.64" stroke-linecap="round" stroke-linejoin="round" /><path d="M513.5 291.3 C512 300 511 310 509.5 320 C508 332 506 342 504 352" fill="none" stroke="#0a0a0a" stroke-width="3.38" stroke-linecap="round" stroke-linejoin="round" /><path d="M509.7 286.5 L513.9 291.3 L518.2 286.5" fill="none" stroke="#0a0a0a" stroke-width="2.60" stroke-linecap="round" stroke-linejoin="round" /><path d="M576.7 288.9 C577.5 300 578 312 578 322.9 C578.5 333 579 343 579.2 352" fill="none" stroke="#0a0a0a" stroke-width="3.38" stroke-linecap="round" stroke-linejoin="round" /><path d="M570.7 285.2 L575.5 288.9 L579.2 284" fill="none" stroke="#0a0a0a" stroke-width="2.60" stroke-linecap="round" stroke-linejoin="round" /><path d="M503.9 351.2 C515 352.5 530 355 543.4 355.3 C555 355 570 353 582 352" fill="none" stroke="#0a0a0a" stroke-width="3.64" stroke-linecap="round" stroke-linejoin="round" /><path d="M490.8 315.3 C489 322 487.5 328 486 333.3 C484 340 482 346 481.1 351.4 C481.5 354 482.5 356.5 483.9 358.3 C486.5 362 489.5 366 492.2 369.4 C494 370.5 496 370.5 497.8 369.4 C500 367.5 501.3 365.5 502 363.9" fill="none" stroke="#0a0a0a" stroke-width="3.38" stroke-linecap="round" stroke-linejoin="round" /><path d="M502.4 352.1 C498.5 350.5 494 351 492 353.5 C490.5 355.5 490.5 358 491.5 359.2 C492.5 360.3 494 360.6 495.2 360.2" fill="none" stroke="#0a0a0a" stroke-width="2.60" stroke-linecap="round" stroke-linejoin="round" /><path d="M592.5 310.5 C595.5 317.5 598.5 324 600.6 329.7 C602.5 336 605 342 606.8 347.8 C607.3 350 607.3 352.5 606.8 354.7 C605 357.5 603 359 600.6 360.3 C596 362 592 362.8 588 363" fill="none" stroke="#0a0a0a" stroke-width="3.38" stroke-linecap="round" stroke-linejoin="round" /><path d="M581.1 353.3 C582.5 350 584.5 347.8 586.7 347.1 C589.5 346.5 592.5 346.5 594.3 347.8 C595.5 349.5 595.5 351.5 595 353.3 C594 354.8 592.5 355.4 590.8 355.4" fill="none" stroke="#0a0a0a" stroke-width="2.60" stroke-linecap="round" stroke-linejoin="round" /><path d="M503.9 351.2 C515 352.5 530 355 543.4 355.3 C555 355 570 353 582 352 C583.5 357 584.5 362 584.6 367.6 C587 380 589.5 390 590.5 397 C592 410 593 420 593.5 433 L548.1 437.5 C548 425 547.5 410 547.3 397 C547.5 385 548 375 549 367.6 C545.5 372 543.5 376 542 379.7 C540 387 539 392 538.6 397 C538 410 537.5 425 536.8 438 L496.1 435.2 C496.5 425 497 418 497.8 410.9 C499 400 500 390 501.3 379.7 C502 370 503 360 503.9 351.9 Z" fill="#0d1848" stroke="none" stroke-width="0.00" stroke-linecap="round" stroke-linejoin="round" /><path d="M524 368 C528 362 534 364 535 372 C536 385 537 400 536 420 C535 430 534 436 530 437 C525 434 520 428 510 425 C506 420 510 415 518 414 C524 410 520 404 514 402 C510 395 516 390 524 388 C526 380 522 373 524 368 Z" fill="#080f33" stroke="none" stroke-width="0.00" stroke-linecap="round" stroke-linejoin="round" /><path d="M552 380 C556 372 562 374 563 385 C564 400 568 412 572 425 C568 435 560 437 550 436 Z" fill="#070d2d" stroke="none" stroke-width="0.00" stroke-linecap="round" stroke-linejoin="round" /><path d="M498 425 C505 420 515 425 522 430 L520 436 L497 435 Z" fill="#0a1240" stroke="none" stroke-width="0.00" stroke-linecap="round" stroke-linejoin="round" /><path d="M556 360 C565 358 575 360 580 366 C575 372 565 372 558 368 Z" fill="#14205a" stroke="none" stroke-width="0.00" stroke-linecap="round" stroke-linejoin="round" opacity="0.8"/><path d="M504 360 C510 358 520 359 526 362 C522 368 512 370 505 368 Z" fill="#14205a" stroke="none" stroke-width="0.00" stroke-linecap="round" stroke-linejoin="round" opacity="0.8"/><path d="M503.9 351.2 C515 352.5 530 355 543.4 355.3 C555 355 570 353 582 352 C583.5 357 584.5 362 584.6 367.6 C587 380 589.5 390 590.5 397 C592 410 593 420 593.5 433 L548.1 437.5 C548 425 547.5 410 547.3 397 C547.5 385 548 375 549 367.6 C545.5 372 543.5 376 542 379.7 C540 387 539 392 538.6 397 C538 410 537.5 425 536.8 438 L496.1 435.2 C496.5 425 497 418 497.8 410.9 C499 400 500 390 501.3 379.7 C502 370 503 360 503.9 351.9 Z" fill="none" stroke="#0a0a0a" stroke-width="3.64" stroke-linecap="round" stroke-linejoin="round" /><path d="M505.5 395 C506.5 391.5 508 389.5 509.5 391.5 C510.5 394.5 512.5 394.5 513.5 391 C514.5 388.5 516 389.5 516.5 392 L518 393 M564.5 390.5 C566.5 388.5 568.5 389 569.5 392 C570.5 394.5 572.5 395.5 574.5 393.5 L577 395.5" fill="none" stroke="#0a0a0a" stroke-width="2.47" stroke-linecap="round" stroke-linejoin="round" /><path d="M530 370 L534 377 L538 370 M545 367 L549 372" fill="none" stroke="#0a0a0a" stroke-width="1.82" stroke-linecap="round" stroke-linejoin="round" opacity="0.6"/><path d="M479 457.4 C482 450 485 445 488.9 441.6 C492 438.5 495 437.5 497.2 437.4 L530.4 439.9 C531 445 531.5 450 531.3 456.5 C525 458.5 520 459.5 513.8 459.9 L480.6 459.9 Z" fill="#050a26" stroke="#0a0a0a" stroke-width="3.12" stroke-linecap="round" stroke-linejoin="round" /><path d="M556.5 441 C570 439 585 437.5 597 437.5 C601 438.5 603.5 441 603.8 444.5 C604 448 603 452 601.5 454 C590 455.5 570 456.7 558 457 C556 454 556 448 556.5 441 Z" fill="#050a26" stroke="#0a0a0a" stroke-width="3.12" stroke-linecap="round" stroke-linejoin="round" /><path d="M504 440 C507 442 510 445 513 448 " fill="none" stroke="#0a0a0a" stroke-width="2.08" stroke-linecap="round" stroke-linejoin="round" /><path d="M578.3 447.3 C581 444 584 441.5 586.7 441 C589 440.3 592 440 595 440" fill="none" stroke="#0a0a0a" stroke-width="2.08" stroke-linecap="round" stroke-linejoin="round" /></svg><div style="position:absolute;left:878px;top:47px;width:146px;height:485px;background:#474747;"></div><div style="position:absolute;left:877.5px;top:48px;width:5px;height:15px;background:transparent;border:1px solid #525252;border-bottom:none;box-sizing:border-box"></div><div style="position:absolute;left:878px;top:47px;width:146px;height:1px;background:#3d3d3d;"></div><div style="position:absolute;left:882.2px;top:48.3px;width:66.4px;height:16px;background:#4a4a4a;border:1px solid #3d3d3d;border-bottom:none;border-radius:2px 2px 0 0;box-sizing:border-box"></div><div style="position:absolute;left:949px;top:50px;width:73.5px;height:12.8px;background:#404040;border:1px solid #3a3a3a;box-sizing:border-box"></div><div style="position:absolute;left:890.80px;top:52.07px;font-size:7.6px;line-height:1;color:#d0d0d0;white-space:nowrap;transform-origin:0 0;transform:scaleX(0.818);">Sélecteur de co...</div><div style="position:absolute;left:957.70px;top:52.07px;font-size:7.6px;line-height:1;color:#d0d0d0;white-space:nowrap;transform-origin:0 0;transform:scaleX(0.823);">Sélecteur de coule...</div><div style="position:absolute;left:883.80px;top:64.57px;font-size:7.6px;line-height:1;color:#d6d6d6;white-space:nowrap;transform-origin:0 0;transform:scaleX(0.824);">Sélecteur de couleurs avancé</div><svg style="position:absolute;left:1009px;top:65px;" width="15" height="7" viewBox="0 0 15 7"><path d="M0.5 2.5 L2.5 0.5 M4.5 0.5 L6.5 2.5 M0.5 4.5 L2.5 6.5 M6.5 4.5 L4.5 6.5" stroke="#a0a0a0" stroke-width="1"/><circle cx="3.5" cy="3.5" r="0.6" fill="#777"/><path d="M8.5 0.5 L14.5 6.5 M14.5 0.5 L8.5 6.5" stroke="#a8a8a8" stroke-width="1.2"/></svg><div style="position:absolute;left:882px;top:74px;width:133px;height:91px;background:#838383;"></div><div style="position:absolute;left:903.4px;top:74.7px;width:90px;height:90px;border-radius:50%;background:conic-gradient(#80ff00 0deg,#00ff00 30deg,#00ffff 90deg,#0000ff 150deg,#ff00ff 210deg,#ff0000 270deg,#ffff00 330deg,#80ff00 360deg);"></div><div style="position:absolute;left:910.6px;top:81.9px;width:75.6px;height:75.6px;border-radius:50%;background:#838383;"></div><svg style="position:absolute;left:882px;top:74px;" width="133" height="91" viewBox="0 0 133 91"><defs>
<linearGradient id="tri1" gradientUnits="userSpaceOnUse" x1="33.7" y1="64.4" x2="99.6" y2="64.4"><stop offset="0" stop-color="#ffffff"/><stop offset="1" stop-color="#ff4a00"/></linearGradient>
<linearGradient id="tri2" gradientUnits="userSpaceOnUse" x1="66.6" y1="8.4" x2="66.6" y2="64.4"><stop offset="0" stop-color="#000" stop-opacity="1"/><stop offset="1" stop-color="#000" stop-opacity="0"/></linearGradient>
</defs>
<path d="M24.5 30.8 L31 33" stroke="#ffe0c0" stroke-width="1.1"/><path d="M63 7 L66 9 L69 7" fill="none" stroke="#555" stroke-width="0.8"/></svg><div style="position:absolute;left:915.7px;top:82.4px;width:65.9px;height:56px;clip-path:polygon(48.7% 0,0 100%,100% 100%);background:linear-gradient(to bottom,#000 0%,rgba(0,0,0,0) 100%),conic-gradient(from 148.9deg at 48.7% 0%,#ff4a00 0deg,#ffffff 60.9deg,#ffffff 360deg)"></div><svg style="position:absolute;left:886px;top:78px;" width="9" height="9" viewBox="0 0 9 9"><rect x="0.5" y="0.5" width="8" height="8" fill="none" stroke="#bbb" stroke-width="1" rx="1"/><path d="M2.5 3.5 H6.5 M2.5 5.5 H6.5 M2 1.5 H7" stroke="#bbb" stroke-width="0.8"/></svg><div style="position:absolute;left:1015px;top:73.6px;width:9px;height:8.8px;background:#000000;"></div><div style="position:absolute;left:1015px;top:82.07px;width:9px;height:8.8px;background:#5a4238;"></div><div style="position:absolute;left:1015px;top:90.54px;width:9px;height:8.8px;background:#2c1f1a;"></div><div style="position:absolute;left:1015px;top:99.01px;width:9px;height:8.8px;background:#0a4ab4;"></div><div style="position:absolute;left:1015px;top:107.48px;width:9px;height:8.8px;background:#060c30;"></div><div style="position:absolute;left:1015px;top:115.95px;width:9px;height:8.8px;background:#0c1a52;"></div><div style="position:absolute;left:1015px;top:124.42px;width:9px;height:8.8px;background:#dcc28e;"></div><div style="position:absolute;left:1015px;top:132.89px;width:9px;height:8.8px;background:#d2b47c;"></div><div style="position:absolute;left:1015px;top:141.36px;width:9px;height:8.8px;background:#c4a46c;"></div><div style="position:absolute;left:1015px;top:149.83px;width:9px;height:8.8px;background:#a88848;"></div><div style="position:absolute;left:1015px;top:158.3px;width:9px;height:8.8px;background:#e4d0a8;"></div><div style="position:absolute;left:1015px;top:166.77px;width:9px;height:8.8px;background:#d4aa60;"></div><div style="position:absolute;left:1015px;top:175.24px;width:9px;height:8.8px;background:#f2ead8;"></div><div style="position:absolute;left:1015px;top:183.71px;width:9px;height:8.8px;background:#2a2010;"></div><div style="position:absolute;left:882px;top:165px;width:133px;height:18px;background:#000;"></div><div style="position:absolute;left:882px;top:170.5px;width:133px;height:1px;background:#606060;"></div><div style="position:absolute;left:882px;top:176.5px;width:133px;height:1px;background:#606060;"></div><div style="position:absolute;left:882px;top:182.5px;width:133px;height:1px;background:#7a7a7a;"></div><div style="position:absolute;left:945px;top:165px;width:1px;height:18px;background:#6a6a6a;"></div><div style="position:absolute;left:950px;top:165px;width:1px;height:18px;background:#6a6a6a;"></div><div style="position:absolute;left:952px;top:171.5px;width:63px;height:5px;background:linear-gradient(90deg,#000,#9a4545);"></div><div style="position:absolute;left:952px;top:177.5px;width:63px;height:5px;background:linear-gradient(90deg,#000,#a4a4a4);"></div><svg style="position:absolute;left:881px;top:183px;" width="11" height="11" viewBox="0 0 11 11"><path d="M2 4 A4 4 0 0 1 9 4 M9 7 A4 4 0 0 1 2 7 M8 2 L9.2 4.2 L7 4.5 M3 9 L1.8 6.8 L4 6.5" fill="none" stroke="#aaa" stroke-width="0.9"/></svg><div style="position:absolute;left:943px;top:195px;width:14px;height:1px;background:#666;"></div><div style="position:absolute;left:882px;top:197.5px;width:28.5px;height:14.3px;background:#4a4a4a;border:1px solid #3d3d3d;border-bottom:none;border-radius:2px 2px 0 0;box-sizing:border-box"></div><div style="position:absolute;left:912px;top:199px;width:39px;height:12.5px;background:#404040;border:1px solid #3a3a3a;box-sizing:border-box"></div><div style="position:absolute;left:952px;top:199px;width:69px;height:12.5px;background:#404040;border:1px solid #3a3a3a;box-sizing:border-box"></div><div style="position:absolute;left:889.50px;top:201.07px;font-size:7.6px;line-height:1;color:#d0d0d0;white-space:nowrap;transform-origin:0 0;transform:scaleX(0.935);">Ca...</div><div style="position:absolute;left:919.00px;top:201.07px;font-size:7.6px;line-height:1;color:#d0d0d0;white-space:nowrap;transform-origin:0 0;transform:scaleX(0.843);">Compo...</div><div style="position:absolute;left:960.50px;top:201.07px;font-size:7.6px;line-height:1;color:#d0d0d0;white-space:nowrap;transform-origin:0 0;transform:scaleX(0.858);">Historique d'annu...</div><div style="position:absolute;left:884.00px;top:213.57px;font-size:7.6px;line-height:1;color:#d6d6d6;white-space:nowrap;transform-origin:0 0;transform:scaleX(0.789);">Calques</div><svg style="position:absolute;left:1009px;top:214px;" width="15" height="7" viewBox="0 0 15 7"><path d="M0.5 2.5 L2.5 0.5 M4.5 0.5 L6.5 2.5 M0.5 4.5 L2.5 6.5 M6.5 4.5 L4.5 6.5" stroke="#a0a0a0" stroke-width="1"/><circle cx="3.5" cy="3.5" r="0.6" fill="#777"/><path d="M8.5 0.5 L14.5 6.5 M14.5 0.5 L8.5 6.5" stroke="#a8a8a8" stroke-width="1.2"/></svg><div style="position:absolute;left:882px;top:224px;width:113px;height:11px;background:#404040;border:1px solid #3a3a3a;box-sizing:border-box"></div><div style="position:absolute;left:885.00px;top:226.07px;font-size:7.6px;line-height:1;color:#dcdcdc;white-space:nowrap;transform-origin:0 0;transform:scaleX(0.837);">Normal</div><svg style="position:absolute;left:984px;top:228px;" width="7" height="4" viewBox="0 0 7 4"><path d="M0.5 0.5 H6.5 L3.5 3.5 Z" fill="#bbb"/></svg><div style="position:absolute;left:997px;top:224px;width:24px;height:11px;background:#404040;border:1px solid #3a3a3a;box-sizing:border-box"></div><svg style="position:absolute;left:1000px;top:225px;" width="20" height="9" viewBox="0 0 20 9"><path d="M1 1 H8 L5.5 4.5 V8 L3.5 7 V4.5 Z" fill="none" stroke="#ccc" stroke-width="0.9"/><path d="M12.5 3 H17.5 L15 5.5 Z" fill="#bbb"/></svg><div style="position:absolute;left:882px;top:236.4px;width:115px;height:14.3px;background:#52708f;"></div><div style="position:absolute;left:917.50px;top:240.07px;font-size:7.6px;line-height:1;color:#e6e6e6;white-space:nowrap;transform-origin:0 0;transform:scaleX(0.847);">Opacité:&nbsp; 100%</div><svg style="position:absolute;left:997px;top:236px;" width="9" height="15" viewBox="0 0 9 15"><path d="M2 5 L4.5 2.5 L7 5 M2 10 L4.5 12.5 L7 10" fill="none" stroke="#999" stroke-width="0.9"/></svg><div style="position:absolute;left:1007px;top:236px;width:16px;height:15px;background:#404040;border:1px solid #3a3a3a;box-sizing:border-box"></div><svg style="position:absolute;left:1009px;top:238px;" width="12" height="11" viewBox="0 0 12 11"><rect x="1" y="1" width="9" height="8" fill="none" stroke="#ccc" stroke-width="1"/><path d="M1 3 H10 M3 5 H8 M3 7 H8" stroke="#ccc" stroke-width="0.8"/><path d="M8.5 8.5 L11.5 8.5 L10 10.5Z" fill="#ccc"/></svg><div style="position:absolute;left:882px;top:251px;width:132px;height:147px;background:#3c3c3c;"></div><svg style="position:absolute;left:884px;top:254.2px;" width="9" height="8" viewBox="0 0 9 8"><path d="M0.5 3 C3 0.5 6 0.5 8.5 3 M0.5 5 C3 7.5 6 7.5 8.5 5" fill="none" stroke="#777" stroke-width="0.8"/></svg><div style="position:absolute;left:896px;top:253.2px;width:11px;height:10px;background:#8a8a8a;background-image:repeating-linear-gradient(45deg,#999 0 1px,#777 1px 2px)"></div><svg style="position:absolute;left:911px;top:252.2px;" width="6" height="7" viewBox="0 0 6 7"><path d="M0.5 0.5 H5.5 V4 L3 6.5 M5.5 0.5 L2 4" fill="none" stroke="#aaa" stroke-width="0.8"/></svg><div style="position:absolute;left:926.50px;top:254.57px;font-size:7.6px;line-height:1;color:#9c9c9c;white-space:nowrap;transform-origin:0 0;transform:scaleX(0.826);">raie milieu</div><svg style="position:absolute;left:984px;top:254.2px;" width="7" height="8" viewBox="0 0 7 8"><rect x="0.5" y="3.5" width="5" height="4" fill="#888"/><path d="M1.5 3.5 V2 C1.5 0.5 4.5 0.5 4.5 2" fill="none" stroke="#888" stroke-width="0.8"/></svg><div style="position:absolute;left:993.00px;top:252.51px;font-size:10.5px;line-height:1;color:#8a8a8a;white-space:nowrap;font-style:italic">α</div><svg style="position:absolute;left:1003px;top:253.2px;" width="10" height="10" viewBox="0 0 10 10"><rect x="0" y="0" width="10" height="10" fill="#666"/><rect x="0" y="0" width="2.5" height="2.5" fill="#aaa"/><rect x="5" y="0" width="2.5" height="2.5" fill="#aaa"/><rect x="2.5" y="2.5" width="2.5" height="2.5" fill="#aaa"/><rect x="7.5" y="2.5" width="2.5" height="2.5" fill="#aaa"/><rect x="0" y="5" width="2.5" height="2.5" fill="#aaa"/><rect x="5" y="5" width="2.5" height="2.5" fill="#aaa"/><rect x="2.5" y="7.5" width="2.5" height="2.5" fill="#aaa"/><rect x="7.5" y="7.5" width="2.5" height="2.5" fill="#aaa"/></svg><svg style="position:absolute;left:884px;top:268.65px;" width="9" height="8" viewBox="0 0 9 8"><path d="M0.5 3 C3 0.5 6 0.5 8.5 3 M0.5 5 C3 7.5 6 7.5 8.5 5" fill="none" stroke="#777" stroke-width="0.8"/></svg><div style="position:absolute;left:896px;top:267.65px;width:11px;height:10px;background:#8a8a8a;background-image:repeating-linear-gradient(45deg,#999 0 1px,#777 1px 2px)"></div><svg style="position:absolute;left:911px;top:266.65px;" width="6" height="7" viewBox="0 0 6 7"><path d="M0.5 0.5 H5.5 V4 L3 6.5 M5.5 0.5 L2 4" fill="none" stroke="#aaa" stroke-width="0.8"/></svg><div style="position:absolute;left:926.50px;top:269.02px;font-size:7.6px;line-height:1;color:#9c9c9c;white-space:nowrap;transform-origin:0 0;transform:scaleX(0.834);">raie coté</div><svg style="position:absolute;left:984px;top:268.65px;" width="7" height="8" viewBox="0 0 7 8"><rect x="0.5" y="3.5" width="5" height="4" fill="#888"/><path d="M1.5 3.5 V2 C1.5 0.5 4.5 0.5 4.5 2" fill="none" stroke="#888" stroke-width="0.8"/></svg><div style="position:absolute;left:993.00px;top:266.96px;font-size:10.5px;line-height:1;color:#8a8a8a;white-space:nowrap;font-style:italic">α</div><svg style="position:absolute;left:1003px;top:267.65px;" width="10" height="10" viewBox="0 0 10 10"><rect x="0" y="0" width="10" height="10" fill="#666"/><rect x="0" y="0" width="2.5" height="2.5" fill="#aaa"/><rect x="5" y="0" width="2.5" height="2.5" fill="#aaa"/><rect x="2.5" y="2.5" width="2.5" height="2.5" fill="#aaa"/><rect x="7.5" y="2.5" width="2.5" height="2.5" fill="#aaa"/><rect x="0" y="5" width="2.5" height="2.5" fill="#aaa"/><rect x="5" y="5" width="2.5" height="2.5" fill="#aaa"/><rect x="2.5" y="7.5" width="2.5" height="2.5" fill="#aaa"/><rect x="7.5" y="7.5" width="2.5" height="2.5" fill="#aaa"/></svg><svg style="position:absolute;left:884px;top:283.09999999999997px;" width="9" height="8" viewBox="0 0 9 8"><path d="M0.5 4 C2.5 0.5 6.5 0.5 8.5 4 C6.5 7.5 2.5 7.5 0.5 4 Z" fill="#ddd"/><circle cx="4.5" cy="4" r="1.6" fill="#333"/></svg><div style="position:absolute;left:898px;top:281.59999999999997px;width:7px;height:11px;background:#f4f4f4;"></div><svg style="position:absolute;left:911px;top:281.09999999999997px;" width="6" height="7" viewBox="0 0 6 7"><path d="M0.5 0.5 H5.5 V4 L3 6.5 M5.5 0.5 L2 4" fill="none" stroke="#aaa" stroke-width="0.8"/></svg><div style="position:absolute;left:926.50px;top:283.47px;font-size:7.6px;line-height:1;color:#e6e6e6;white-space:nowrap;transform-origin:0 0;transform:scaleX(0.888);">t shirt</div><svg style="position:absolute;left:984px;top:283.09999999999997px;" width="7" height="8" viewBox="0 0 7 8"><rect x="0.5" y="3.5" width="5" height="4" fill="#888"/><path d="M1.5 3.5 V2 C1.5 0.5 4.5 0.5 4.5 2" fill="none" stroke="#888" stroke-width="0.8"/></svg><div style="position:absolute;left:993.00px;top:281.41px;font-size:10.5px;line-height:1;color:#8a8a8a;white-space:nowrap;font-style:italic">α</div><svg style="position:absolute;left:1003px;top:282.09999999999997px;" width="10" height="10" viewBox="0 0 10 10"><rect x="0" y="0" width="10" height="10" fill="#666"/><rect x="0" y="0" width="2.5" height="2.5" fill="#aaa"/><rect x="5" y="0" width="2.5" height="2.5" fill="#aaa"/><rect x="2.5" y="2.5" width="2.5" height="2.5" fill="#aaa"/><rect x="7.5" y="2.5" width="2.5" height="2.5" fill="#aaa"/><rect x="0" y="5" width="2.5" height="2.5" fill="#aaa"/><rect x="5" y="5" width="2.5" height="2.5" fill="#aaa"/><rect x="2.5" y="7.5" width="2.5" height="2.5" fill="#aaa"/><rect x="7.5" y="7.5" width="2.5" height="2.5" fill="#aaa"/></svg><div style="position:absolute;left:894.8px;top:294.65000000000003px;width:119.2px;height:13.9px;background:#52708f;"></div><svg style="position:absolute;left:884px;top:297.55px;" width="9" height="8" viewBox="0 0 9 8"><path d="M0.5 4 C2.5 0.5 6.5 0.5 8.5 4 C6.5 7.5 2.5 7.5 0.5 4 Z" fill="#ddd"/><circle cx="4.5" cy="4" r="1.6" fill="#333"/></svg><div style="position:absolute;left:897px;top:296.05px;width:9px;height:11px;background:#f4f4f4;"></div><div style="position:absolute;left:900px;top:299.55px;width:3px;height:5px;background:#1a55c0;"></div><div style="position:absolute;left:900px;top:303.55px;width:3px;height:3px;background:#0a1040;"></div><div style="position:absolute;left:900px;top:296.55px;width:3px;height:2.5px;background:#3a2a22;"></div><svg style="position:absolute;left:911px;top:295.55px;" width="6" height="7" viewBox="0 0 6 7"><path d="M0.5 0.5 H5.5 V4 L3 6.5 M5.5 0.5 L2 4" fill="none" stroke="#aaa" stroke-width="0.8"/></svg><div style="position:absolute;left:927.30px;top:297.92px;font-size:7.6px;line-height:1;color:#f0f0f0;white-space:nowrap;transform-origin:0 0;transform:scaleX(0.878);font-weight:bold;">Calque de d...</div><svg style="position:absolute;left:984px;top:297.55px;" width="7" height="8" viewBox="0 0 7 8"><rect x="0.5" y="3.5" width="5" height="4" fill="#888"/><path d="M1.5 3.5 V2 C1.5 0.5 4.5 0.5 4.5 2" fill="none" stroke="#888" stroke-width="0.8"/></svg><div style="position:absolute;left:993.00px;top:295.86px;font-size:10.5px;line-height:1;color:#8a8a8a;white-space:nowrap;font-style:italic">α</div><svg style="position:absolute;left:1003px;top:296.55px;" width="10" height="10" viewBox="0 0 10 10"><rect x="0" y="0" width="10" height="10" fill="#666"/><rect x="0" y="0" width="2.5" height="2.5" fill="#aaa"/><rect x="5" y="0" width="2.5" height="2.5" fill="#aaa"/><rect x="2.5" y="2.5" width="2.5" height="2.5" fill="#aaa"/><rect x="7.5" y="2.5" width="2.5" height="2.5" fill="#aaa"/><rect x="0" y="5" width="2.5" height="2.5" fill="#aaa"/><rect x="5" y="5" width="2.5" height="2.5" fill="#aaa"/><rect x="2.5" y="7.5" width="2.5" height="2.5" fill="#aaa"/><rect x="7.5" y="7.5" width="2.5" height="2.5" fill="#aaa"/></svg><svg style="position:absolute;left:884px;top:312.0px;" width="9" height="8" viewBox="0 0 9 8"><path d="M0.5 3 C3 0.5 6 0.5 8.5 3 M0.5 5 C3 7.5 6 7.5 8.5 5" fill="none" stroke="#777" stroke-width="0.8"/></svg><div style="position:absolute;left:897.5px;top:310.5px;width:8px;height:11px;background:#8a8a8a;background-image:repeating-linear-gradient(45deg,#999 0 1px,#777 1px 2px)"></div><svg style="position:absolute;left:911px;top:310.0px;" width="6" height="7" viewBox="0 0 6 7"><path d="M0.5 0.5 H5.5 V4 L3 6.5 M5.5 0.5 L2 4" fill="none" stroke="#aaa" stroke-width="0.8"/></svg><div style="position:absolute;left:926.50px;top:312.37px;font-size:7.6px;line-height:1;color:#9c9c9c;white-space:nowrap;transform-origin:0 0;transform:scaleX(0.803);">pull</div><svg style="position:absolute;left:984px;top:312.0px;" width="7" height="8" viewBox="0 0 7 8"><rect x="0.5" y="3.5" width="5" height="4" fill="#888"/><path d="M1.5 3.5 V2 C1.5 0.5 4.5 0.5 4.5 2" fill="none" stroke="#888" stroke-width="0.8"/></svg><div style="position:absolute;left:993.00px;top:310.31px;font-size:10.5px;line-height:1;color:#8a8a8a;white-space:nowrap;font-style:italic">α</div><svg style="position:absolute;left:1003px;top:311.0px;" width="10" height="10" viewBox="0 0 10 10"><rect x="0" y="0" width="10" height="10" fill="#666"/><rect x="0" y="0" width="2.5" height="2.5" fill="#aaa"/><rect x="5" y="0" width="2.5" height="2.5" fill="#aaa"/><rect x="2.5" y="2.5" width="2.5" height="2.5" fill="#aaa"/><rect x="7.5" y="2.5" width="2.5" height="2.5" fill="#aaa"/><rect x="0" y="5" width="2.5" height="2.5" fill="#aaa"/><rect x="5" y="5" width="2.5" height="2.5" fill="#aaa"/><rect x="2.5" y="7.5" width="2.5" height="2.5" fill="#aaa"/><rect x="7.5" y="7.5" width="2.5" height="2.5" fill="#aaa"/></svg><svg style="position:absolute;left:884px;top:326.45px;" width="9" height="8" viewBox="0 0 9 8"><path d="M0.5 3 C3 0.5 6 0.5 8.5 3 M0.5 5 C3 7.5 6 7.5 8.5 5" fill="none" stroke="#777" stroke-width="0.8"/></svg><div style="position:absolute;left:897.5px;top:324.95px;width:8px;height:11px;background:#8a8a8a;background-image:repeating-linear-gradient(45deg,#999 0 1px,#777 1px 2px)"></div><svg style="position:absolute;left:911px;top:324.45px;" width="6" height="7" viewBox="0 0 6 7"><path d="M0.5 0.5 H5.5 V4 L3 6.5 M5.5 0.5 L2 4" fill="none" stroke="#aaa" stroke-width="0.8"/></svg><div style="position:absolute;left:926.50px;top:326.82px;font-size:7.6px;line-height:1;color:#9c9c9c;white-space:nowrap;transform-origin:0 0;transform:scaleX(0.815);">veste</div><svg style="position:absolute;left:984px;top:326.45px;" width="7" height="8" viewBox="0 0 7 8"><rect x="0.5" y="3.5" width="5" height="4" fill="#888"/><path d="M1.5 3.5 V2 C1.5 0.5 4.5 0.5 4.5 2" fill="none" stroke="#888" stroke-width="0.8"/></svg><div style="position:absolute;left:993.00px;top:324.76px;font-size:10.5px;line-height:1;color:#8a8a8a;white-space:nowrap;font-style:italic">α</div><svg style="position:absolute;left:1003px;top:325.45px;" width="10" height="10" viewBox="0 0 10 10"><rect x="0" y="0" width="10" height="10" fill="#666"/><rect x="0" y="0" width="2.5" height="2.5" fill="#aaa"/><rect x="5" y="0" width="2.5" height="2.5" fill="#aaa"/><rect x="2.5" y="2.5" width="2.5" height="2.5" fill="#aaa"/><rect x="7.5" y="2.5" width="2.5" height="2.5" fill="#aaa"/><rect x="0" y="5" width="2.5" height="2.5" fill="#aaa"/><rect x="5" y="5" width="2.5" height="2.5" fill="#aaa"/><rect x="2.5" y="7.5" width="2.5" height="2.5" fill="#aaa"/><rect x="7.5" y="7.5" width="2.5" height="2.5" fill="#aaa"/></svg><svg style="position:absolute;left:884px;top:340.9px;" width="9" height="8" viewBox="0 0 9 8"><path d="M0.5 3 C3 0.5 6 0.5 8.5 3 M0.5 5 C3 7.5 6 7.5 8.5 5" fill="none" stroke="#777" stroke-width="0.8"/></svg><div style="position:absolute;left:897.5px;top:339.4px;width:8px;height:11px;background:#8a8a8a;background-image:repeating-linear-gradient(45deg,#999 0 1px,#777 1px 2px)"></div><svg style="position:absolute;left:911px;top:338.9px;" width="6" height="7" viewBox="0 0 6 7"><path d="M0.5 0.5 H5.5 V4 L3 6.5 M5.5 0.5 L2 4" fill="none" stroke="#aaa" stroke-width="0.8"/></svg><div style="position:absolute;left:926.50px;top:341.27px;font-size:7.6px;line-height:1;color:#9c9c9c;white-space:nowrap;transform-origin:0 0;transform:scaleX(0.831);">sweat</div><svg style="position:absolute;left:984px;top:340.9px;" width="7" height="8" viewBox="0 0 7 8"><rect x="0.5" y="3.5" width="5" height="4" fill="#888"/><path d="M1.5 3.5 V2 C1.5 0.5 4.5 0.5 4.5 2" fill="none" stroke="#888" stroke-width="0.8"/></svg><div style="position:absolute;left:993.00px;top:339.21px;font-size:10.5px;line-height:1;color:#8a8a8a;white-space:nowrap;font-style:italic">α</div><svg style="position:absolute;left:1003px;top:339.9px;" width="10" height="10" viewBox="0 0 10 10"><rect x="0" y="0" width="10" height="10" fill="#666"/><rect x="0" y="0" width="2.5" height="2.5" fill="#aaa"/><rect x="5" y="0" width="2.5" height="2.5" fill="#aaa"/><rect x="2.5" y="2.5" width="2.5" height="2.5" fill="#aaa"/><rect x="7.5" y="2.5" width="2.5" height="2.5" fill="#aaa"/><rect x="0" y="5" width="2.5" height="2.5" fill="#aaa"/><rect x="5" y="5" width="2.5" height="2.5" fill="#aaa"/><rect x="2.5" y="7.5" width="2.5" height="2.5" fill="#aaa"/><rect x="7.5" y="7.5" width="2.5" height="2.5" fill="#aaa"/></svg><svg style="position:absolute;left:884px;top:355.34999999999997px;" width="9" height="8" viewBox="0 0 9 8"><path d="M0.5 3 C3 0.5 6 0.5 8.5 3 M0.5 5 C3 7.5 6 7.5 8.5 5" fill="none" stroke="#777" stroke-width="0.8"/></svg><div style="position:absolute;left:896px;top:354.34999999999997px;width:11px;height:10px;background:#8a8a8a;background-image:repeating-linear-gradient(45deg,#999 0 1px,#777 1px 2px)"></div><svg style="position:absolute;left:911px;top:353.34999999999997px;" width="6" height="7" viewBox="0 0 6 7"><path d="M0.5 0.5 H5.5 V4 L3 6.5 M5.5 0.5 L2 4" fill="none" stroke="#aaa" stroke-width="0.8"/></svg><div style="position:absolute;left:926.50px;top:355.72px;font-size:7.6px;line-height:1;color:#9c9c9c;white-space:nowrap;transform-origin:0 0;transform:scaleX(0.808);">Calque de des...</div><svg style="position:absolute;left:984px;top:355.34999999999997px;" width="7" height="8" viewBox="0 0 7 8"><rect x="0.5" y="3.5" width="5" height="4" fill="#888"/><path d="M1.5 3.5 V2 C1.5 0.5 4.5 0.5 4.5 2" fill="none" stroke="#888" stroke-width="0.8"/></svg><div style="position:absolute;left:993.00px;top:353.66px;font-size:10.5px;line-height:1;color:#8a8a8a;white-space:nowrap;font-style:italic">α</div><svg style="position:absolute;left:1003px;top:354.34999999999997px;" width="10" height="10" viewBox="0 0 10 10"><rect x="0" y="0" width="10" height="10" fill="#666"/><rect x="0" y="0" width="2.5" height="2.5" fill="#aaa"/><rect x="5" y="0" width="2.5" height="2.5" fill="#aaa"/><rect x="2.5" y="2.5" width="2.5" height="2.5" fill="#aaa"/><rect x="7.5" y="2.5" width="2.5" height="2.5" fill="#aaa"/><rect x="0" y="5" width="2.5" height="2.5" fill="#aaa"/><rect x="5" y="5" width="2.5" height="2.5" fill="#aaa"/><rect x="2.5" y="7.5" width="2.5" height="2.5" fill="#aaa"/><rect x="7.5" y="7.5" width="2.5" height="2.5" fill="#aaa"/></svg><svg style="position:absolute;left:884px;top:369.8px;" width="9" height="8" viewBox="0 0 9 8"><path d="M0.5 3 C3 0.5 6 0.5 8.5 3 M0.5 5 C3 7.5 6 7.5 8.5 5" fill="none" stroke="#777" stroke-width="0.8"/></svg><div style="position:absolute;left:897.5px;top:368.3px;width:8px;height:11px;background:#8a8a8a;background-image:repeating-linear-gradient(45deg,#999 0 1px,#777 1px 2px)"></div><svg style="position:absolute;left:911px;top:367.8px;" width="6" height="7" viewBox="0 0 6 7"><path d="M0.5 0.5 H5.5 V4 L3 6.5 M5.5 0.5 L2 4" fill="none" stroke="#aaa" stroke-width="0.8"/></svg><div style="position:absolute;left:926.50px;top:370.17px;font-size:7.6px;line-height:1;color:#9c9c9c;white-space:nowrap;transform-origin:0 0;transform:scaleX(0.875);">col roulin</div><svg style="position:absolute;left:984px;top:369.8px;" width="7" height="8" viewBox="0 0 7 8"><rect x="0.5" y="3.5" width="5" height="4" fill="#888"/><path d="M1.5 3.5 V2 C1.5 0.5 4.5 0.5 4.5 2" fill="none" stroke="#888" stroke-width="0.8"/></svg><div style="position:absolute;left:993.00px;top:368.11px;font-size:10.5px;line-height:1;color:#8a8a8a;white-space:nowrap;font-style:italic">α</div><svg style="position:absolute;left:1003px;top:368.8px;" width="10" height="10" viewBox="0 0 10 10"><rect x="0" y="0" width="10" height="10" fill="#666"/><rect x="0" y="0" width="2.5" height="2.5" fill="#aaa"/><rect x="5" y="0" width="2.5" height="2.5" fill="#aaa"/><rect x="2.5" y="2.5" width="2.5" height="2.5" fill="#aaa"/><rect x="7.5" y="2.5" width="2.5" height="2.5" fill="#aaa"/><rect x="0" y="5" width="2.5" height="2.5" fill="#aaa"/><rect x="5" y="5" width="2.5" height="2.5" fill="#aaa"/><rect x="2.5" y="7.5" width="2.5" height="2.5" fill="#aaa"/><rect x="7.5" y="7.5" width="2.5" height="2.5" fill="#aaa"/></svg><svg style="position:absolute;left:884px;top:384.24999999999994px;" width="9" height="8" viewBox="0 0 9 8"><path d="M0.5 3 C3 0.5 6 0.5 8.5 3 M0.5 5 C3 7.5 6 7.5 8.5 5" fill="none" stroke="#777" stroke-width="0.8"/></svg><div style="position:absolute;left:899px;top:382.74999999999994px;width:5px;height:11px;background:#8a8a8a;"></div><svg style="position:absolute;left:911px;top:382.24999999999994px;" width="6" height="7" viewBox="0 0 6 7"><path d="M0.5 0.5 H5.5 V4 L3 6.5 M5.5 0.5 L2 4" fill="none" stroke="#aaa" stroke-width="0.8"/></svg><div style="position:absolute;left:926.50px;top:384.62px;font-size:7.6px;line-height:1;color:#9c9c9c;white-space:nowrap;transform-origin:0 0;transform:scaleX(0.808);">Calque de des...</div><svg style="position:absolute;left:984px;top:384.24999999999994px;" width="7" height="8" viewBox="0 0 7 8"><rect x="0.5" y="3.5" width="5" height="4" fill="#888"/><path d="M1.5 3.5 V2 C1.5 0.5 4.5 0.5 4.5 2" fill="none" stroke="#888" stroke-width="0.8"/></svg><div style="position:absolute;left:993.00px;top:382.56px;font-size:10.5px;line-height:1;color:#8a8a8a;white-space:nowrap;font-style:italic">α</div><svg style="position:absolute;left:1003px;top:383.24999999999994px;" width="10" height="10" viewBox="0 0 10 10"><rect x="0" y="0" width="10" height="10" fill="#666"/><rect x="0" y="0" width="2.5" height="2.5" fill="#aaa"/><rect x="5" y="0" width="2.5" height="2.5" fill="#aaa"/><rect x="2.5" y="2.5" width="2.5" height="2.5" fill="#aaa"/><rect x="7.5" y="2.5" width="2.5" height="2.5" fill="#aaa"/><rect x="0" y="5" width="2.5" height="2.5" fill="#aaa"/><rect x="5" y="5" width="2.5" height="2.5" fill="#aaa"/><rect x="2.5" y="7.5" width="2.5" height="2.5" fill="#aaa"/><rect x="7.5" y="7.5" width="2.5" height="2.5" fill="#aaa"/></svg><div style="position:absolute;left:1014px;top:251px;width:9px;height:147px;background:#3a3a3a;"></div><div style="position:absolute;left:1014px;top:251px;width:9px;height:10px;background:#454545;border:1px solid #3a3a3a;box-sizing:border-box"></div><svg style="position:absolute;left:1014px;top:251px;" width="9" height="10" viewBox="0 0 9 10"><path d="M2 6.5 L4.5 4 L7 6.5 Z" fill="#ddd"/></svg><div style="position:absolute;left:1014px;top:262px;width:9px;height:91.5px;background:#474747;border:1px solid #4d4d4d;box-sizing:border-box"></div><div style="position:absolute;left:1014px;top:388px;width:9px;height:10px;background:#454545;border:1px solid #3a3a3a;box-sizing:border-box"></div><svg style="position:absolute;left:1014px;top:388px;" width="9" height="10" viewBox="0 0 9 10"><path d="M2 3.5 L4.5 6 L7 3.5 Z" fill="#ddd"/></svg><svg style="position:absolute;left:884px;top:400px;" width="14" height="14" viewBox="0 0 14 14"><rect x="1" y="1" width="10" height="10" fill="none" stroke="#ddd" stroke-width="1.1"/><path d="M6 3 V9 M3 6 H9" stroke="#ddd" stroke-width="1.2"/></svg><svg style="position:absolute;left:899px;top:405px;" width="5" height="4" viewBox="0 0 5 4"><path d="M0 0.5 H5 L2.5 3 Z" fill="#aaa"/></svg><svg style="position:absolute;left:908px;top:400px;" width="12" height="12" viewBox="0 0 12 12"><rect x="1" y="3.5" width="7" height="7" fill="none" stroke="#ccc" stroke-width="1"/><path d="M3.5 3.5 V1 H10.5 V8 H8" fill="none" stroke="#ccc" stroke-width="1"/></svg><svg style="position:absolute;left:925px;top:402px;" width="12" height="8" viewBox="0 0 12 8"><path d="M1 1.5 L6 6 L11 1.5" fill="none" stroke="#ddd" stroke-width="1.1"/></svg><svg style="position:absolute;left:942px;top:402px;" width="12" height="8" viewBox="0 0 12 8"><path d="M1 6.5 L6 2 L11 6.5" fill="none" stroke="#ddd" stroke-width="1.1"/></svg><svg style="position:absolute;left:959px;top:400px;" width="12" height="12" viewBox="0 0 12 12"><path d="M1 2.5 H11 M1 6 H11 M1 9.5 H11" stroke="#ddd" stroke-width="1"/><rect x="6.5" y="1" width="2" height="3" fill="#ddd"/><rect x="3" y="4.5" width="2" height="3" fill="#ddd"/><rect x="6.5" y="8" width="2" height="3" fill="#ddd"/></svg><svg style="position:absolute;left:1010px;top:400px;" width="11" height="12" viewBox="0 0 11 12"><rect x="2" y="3" width="7" height="8" fill="#ddd"/><rect x="1" y="1.5" width="9" height="1.5" fill="#ddd"/></svg><div style="position:absolute;left:943px;top:416.5px;width:14px;height:1px;background:#666;"></div><div style="position:absolute;left:883.50px;top:420.57px;font-size:7.6px;line-height:1;color:#cfcfcf;white-space:nowrap;transform-origin:0 0;transform:scaleX(0.827);">Préférences d'outils</div><svg style="position:absolute;left:1009px;top:421px;" width="15" height="7" viewBox="0 0 15 7"><path d="M0.5 2.5 L2.5 0.5 M4.5 0.5 L6.5 2.5 M0.5 4.5 L2.5 6.5 M6.5 4.5 L4.5 6.5" stroke="#a0a0a0" stroke-width="1"/><circle cx="3.5" cy="3.5" r="0.6" fill="#777"/><path d="M8.5 0.5 L14.5 6.5 M14.5 0.5 L8.5 6.5" stroke="#a8a8a8" stroke-width="1.2"/></svg><div style="position:absolute;left:883.50px;top:436.27px;font-size:7.6px;line-height:1;color:#d0d0d0;white-space:nowrap;transform-origin:0 0;transform:scaleX(0.798);">Lissage de la brosse :</div><div style="position:absolute;left:957.7px;top:434px;width:62.7px;height:11px;background:#404040;border:1px solid #3a3a3a;box-sizing:border-box"></div><div style="position:absolute;left:960.00px;top:436.07px;font-size:7.6px;line-height:1;color:#d8d8d8;white-space:nowrap;transform-origin:0 0;transform:scaleX(0.801);">Basique</div><svg style="position:absolute;left:1010px;top:438px;" width="7" height="4" viewBox="0 0 7 4"><path d="M0.5 0.5 H6.5 L3.5 3.5 Z" fill="#bbb"/></svg><div style="position:absolute;left:883.5px;top:448.8px;width:137px;height:1.2px;background:#a8a8a8;"></div><div style="position:absolute;left:883.5px;top:454px;width:9px;height:9px;background:#3a3a3a;"></div><div style="position:absolute;left:895.50px;top:454.57px;font-size:7.6px;line-height:1;color:#d0d0d0;white-space:nowrap;transform-origin:0 0;transform:scaleX(0.784);">Assistants aimantés</div><div style="position:absolute;left:0px;top:532.5px;width:1024px;height:17px;background:#474747;"></div><div style="position:absolute;left:0px;top:532.5px;width:1024px;height:1px;background:#3d3d3d;"></div><svg style="position:absolute;left:3px;top:536px;" width="10" height="10" viewBox="0 0 10 10"><rect x="0.5" y="0.5" width="9" height="9" fill="none" stroke="#888" stroke-width="1" rx="1"/><circle cx="5" cy="5" r="2.5" fill="none" stroke="#888" stroke-width="0.8"/></svg><div style="position:absolute;left:19.50px;top:537.77px;font-size:7.6px;line-height:1;color:#d0d0d0;white-space:nowrap;transform-origin:0 0;transform:scaleX(0.890);">b) Basic-5 Size</div><div style="position:absolute;left:227.50px;top:537.77px;font-size:7.6px;line-height:1;color:#d0d0d0;white-space:nowrap;transform-origin:0 0;transform:scaleX(0.898);">RGB/Alpha (Entier sur 8 bits / canal) sRGB-elle-V2-srgbtrc.icc</div><div style="position:absolute;left:660px;top:535.6px;width:80.5px;height:11.5px;background:#404040;border:1px solid #3a3a3a;box-sizing:border-box"></div><div style="position:absolute;left:662.50px;top:537.77px;font-size:7.6px;line-height:1;color:#d0d0d0;white-space:nowrap;transform-origin:0 0;transform:scaleX(0.923);">1 016 x 1 576 (61,2 Mio)</div><div style="position:absolute;left:801.5px;top:535px;width:12px;height:12px;border-radius:50%;background:#2c2c2c"></div><svg style="position:absolute;left:802px;top:539px;" width="11" height="4" viewBox="0 0 11 4"><path d="M1.5 2 H3 M5 2 H9" fill="none" stroke="#ccc" stroke-width="0.8"/><circle cx="7.5" cy="2" r="1" fill="#eee"/><path d="M8.5 1 L9.8 2 L8.5 3" fill="none" stroke="#ccc" stroke-width="0.6"/></svg><div style="position:absolute;left:829.50px;top:537.77px;font-size:7.6px;line-height:1;color:#d0d0d0;white-space:nowrap;transform-origin:0 0;transform:scaleX(1.010);">0,00°</div><div style="position:absolute;left:940.00px;top:537.77px;font-size:7.6px;line-height:1;color:#d0d0d0;white-space:nowrap;transform-origin:0 0;transform:scaleX(0.837);">50 %</div><div style="position:absolute;left:967px;top:540px;width:4px;height:2px;background:#6a9acf;"></div><div style="position:absolute;left:971px;top:540.5px;width:42px;height:1.5px;background:#2e2e2e;"></div><div style="position:absolute;left:971px;top:536px;width:8px;height:9px;background:#505050;border:1px solid #3a3a3a;box-sizing:border-box;border-radius:1px"></div><div style="position:absolute;left:1011px;top:535px;width:12px;height:12px;background:#3f3f3f;"></div><div style="position:absolute;left:1012.5px;top:537px;width:9px;height:9px;background:#b7d7e8;border:1px solid #ddd;box-sizing:border-box"></div><div style="position:absolute;left:0px;top:549.2px;width:1024px;height:26.8px;background:#e7dce1;"></div><div style="position:absolute;left:0px;top:549.2px;width:1024px;height:1px;background:#efe5ea;"></div><div style="position:absolute;left:33px;top:549.2px;width:190.6px;height:26.8px;background:#ffffff;"></div><svg style="position:absolute;left:10px;top:557px;" width="12" height="12" viewBox="0 0 12 12"><path d="M0 1.7 L4.8 1 V5.4 H0 Z M5.6 0.9 L12 0 V5.4 H5.6 Z M0 6.2 H4.8 V10.6 L0 9.9 Z M5.6 6.2 H12 V11.6 L5.6 10.7 Z" fill="#111"/></svg><svg style="position:absolute;left:39px;top:555px;" width="14" height="14" viewBox="0 0 14 14"><circle cx="8.5" cy="5.5" r="4" fill="none" stroke="#222" stroke-width="1.2"/><path d="M5.5 8.5 L1 13" stroke="#222" stroke-width="1.3"/></svg><div style="position:absolute;left:58.70px;top:557.29px;font-size:11px;line-height:1;color:#333;white-space:nowrap;transform-origin:0 0;transform:scaleX(0.931);">Taper ici pour</div><svg style="position:absolute;left:165px;top:546px;" width="60" height="30" viewBox="0 0 60 30"><path d="M7 30 L15 20 H54 L59 30 Z" fill="#dfc79a"/>
<path d="M14.5 16 L30 12 L32 21 L17 25.5 Z" fill="#4a9a48"/><path d="M15 14.5 L23 12 L30.5 10.5 L32 19.5 L24 21.5 L16.5 23.5 Z" fill="#f2eef6"/><path d="M23 12 L24 21.5" stroke="#ccc" stroke-width="0.6"/>
<path d="M27 15.5 L33 8.5" stroke="#f0b030" stroke-width="2.2"/><path d="M32.5 9 L34 7" stroke="#e84a4a" stroke-width="2.4" stroke-linecap="round"/>
<defs><linearGradient id="bp" x1="0" y1="0" x2="0" y2="1"><stop offset="0" stop-color="#2a8cf0"/><stop offset="1" stop-color="#1a5ad8"/></linearGradient></defs>
<path d="M39 11 C39 6.5 41.5 5 45 5 C48.5 5 51.5 6.5 51.5 11 V24 C51.5 25.5 50.5 26 49 26 H41.5 C40 26 39 25.5 39 24 Z" fill="url(#bp)"/><path d="M42.5 6.5 C43 4.5 47 4.5 47.5 6.5" fill="none" stroke="#2060d0" stroke-width="1"/>
<path d="M40 22 C40 18.5 50.5 18.5 50.5 22 V24 H40 Z" fill="#1e8af0"/><rect x="40" y="23" width="10.5" height="1.3" fill="#c070f0"/></svg><svg style="position:absolute;left:233px;top:555px;" width="14" height="14" viewBox="0 0 14 14"><rect x="2.5" y="3" width="7" height="8" fill="none" stroke="#222" stroke-width="1.1"/><path d="M1 2.5 H11 M1 11.5 H11 M12.5 1.5 V12.5" stroke="#222" stroke-width="1.1"/></svg><div style="position:absolute;left:258px;top:549.2px;width:32px;height:26.8px;background:#f5b088;"></div><div style="position:absolute;left:258px;top:574px;width:32px;height:2px;background:#f0702a;"></div><svg style="position:absolute;left:263px;top:551px;" width="22" height="22" viewBox="0 0 22 22"><defs><radialGradient id="ff1" cx="0.65" cy="0.25" r="0.85"><stop offset="0" stop-color="#ffd23a"/><stop offset="0.45" stop-color="#ff7a1a"/><stop offset="1" stop-color="#e0306a"/></radialGradient></defs>
<circle cx="11" cy="11.5" r="7.3" fill="url(#ff1)"/><path d="M13 4 C16 5 18 8 18.3 10 L15 8 Z" fill="#ffb030"/><circle cx="10.8" cy="11.8" r="3.6" fill="#7a2fd0"/><path d="M6.5 9.5 C7.5 7 10.5 6.5 12.5 8 C10.5 8.3 9 9.5 9 11 Z" fill="#ff9a30"/></svg><svg style="position:absolute;left:296px;top:553px;" width="22" height="22" viewBox="0 0 22 22"><defs><linearGradient id="ed1" x1="0" y1="0" x2="1" y2="1"><stop offset="0" stop-color="#40d880"/><stop offset="0.45" stop-color="#1aa0d8"/><stop offset="1" stop-color="#0a58b0"/></linearGradient></defs>
<circle cx="11" cy="11" r="8.5" fill="url(#ed1)"/><path d="M7 14 C6 10 9 7.5 12.5 8 C16 8.5 17.5 11 17 13 C15 14 11 14.5 9 16 Z" fill="#e8dde2"/><path d="M9 16 C12 18 16 17 19 14" fill="none" stroke="#0a60b8" stroke-width="2"/><rect x="2.5" y="13.5" width="9" height="6.5" rx="1" fill="#c47a1a"/><rect x="2.5" y="15.8" width="9" height="1" fill="#7a4a10"/><rect x="5.5" y="12.5" width="3" height="1.5" fill="none" stroke="#7a4a10" stroke-width="0.7"/></svg><svg style="position:absolute;left:330px;top:554px;" width="20" height="18" viewBox="0 0 20 18"><rect x="1" y="4" width="18" height="13" fill="#1a8ad8"/><path d="M1 4 L10 11 L19 4" fill="#40b0f0" stroke="#fff" stroke-width="0.8"/><path d="M1 17 L8 10 M19 17 L12 10" stroke="#1270b8" stroke-width="0.8"/></svg><svg style="position:absolute;left:363px;top:553px;" width="20" height="20" viewBox="0 0 20 20"><path d="M1 4 H8 L10 6 H19 V17 H1 Z" fill="#f8c840"/><rect x="1" y="8" width="18" height="9" fill="#ffd860"/><rect x="6" y="11" width="8" height="6" fill="#1a8ad8"/></svg><div style="position:absolute;left:360px;top:574px;width:27px;height:2px;background:#1a78c8;"></div><svg style="position:absolute;left:397px;top:553px;" width="20" height="20" viewBox="0 0 20 20"><ellipse cx="10" cy="10" rx="7.8" ry="8.2" fill="none" stroke="#e0283a" stroke-width="1.3"/><ellipse cx="10" cy="10" rx="3.6" ry="6.3" fill="none" stroke="#e0283a" stroke-width="1.1"/></svg><div style="position:absolute;left:393px;top:574px;width:27px;height:2px;background:#1a78c8;"></div><div style="position:absolute;left:423.6px;top:549.2px;width:32.4px;height:26.8px;background:#f5b088;"></div><div style="position:absolute;left:423.6px;top:574px;width:32.4px;height:2px;background:#f0702a;"></div><svg style="position:absolute;left:429px;top:552px;" width="24" height="22" viewBox="0 0 24 22"><circle cx="10" cy="10" r="8.5" fill="#5865f2"/><path d="M5.5 7 C7.5 5.5 12.5 5.5 14.5 7 L15.5 12.5 C14 13.5 12.5 14 12 13.5 L11.5 12.5 H8.5 L8 13.5 C7.5 14 6 13.5 4.5 12.5 Z" fill="#fff"/><circle cx="8" cy="10" r="1" fill="#5865f2"/><circle cx="12" cy="10" r="1" fill="#5865f2"/><circle cx="17" cy="15.5" r="5" fill="#e03a3a" stroke="#f5b088" stroke-width="0.8"/><text x="17" y="18" font-size="7" fill="#fff" text-anchor="middle" font-family="Liberation Sans" font-weight="bold">9+</text></svg><div style="position:absolute;left:456px;top:549.2px;width:33px;height:26.8px;background:#f2ecee;"></div><div style="position:absolute;left:456px;top:574px;width:33px;height:2px;background:#1a78c8;"></div><div style="position:absolute;left:465.5px;top:555.7px;width:13px;height:13px;border-radius:50%;background:conic-gradient(from 0deg,#ff50f0 0deg,#ffb0d0 70deg,#f8f860 120deg,#80f0e0 180deg,#30f0f0 220deg,#c0c0ff 290deg,#ff50f0 360deg)"></div><svg style="position:absolute;left:460px;top:550px;" width="24" height="24" viewBox="0 0 24 24"><circle cx="12" cy="12.2" r="3.5" fill="#e8f8ff" opacity="0.6"/><path d="M4.5 5 L13 13" stroke="#222" stroke-width="2" stroke-linecap="round"/><path d="M12.5 12.5 L14.5 14.2" stroke="#1a3a8a" stroke-width="1.6"/></svg><svg style="position:absolute;left:496px;top:554px;" width="18" height="17" viewBox="0 0 18 17"><rect x="4" y="1" width="13" height="15" rx="1" fill="#2b7cd3"/><rect x="4" y="5.5" width="13" height="5" fill="#185abd"/><rect x="4" y="10.5" width="13" height="5.5" fill="#103f91"/><rect x="0.5" y="4" width="10" height="9.5" rx="1" fill="#185abd"/><text x="5.5" y="11.8" font-size="7.5" fill="#fff" text-anchor="middle" font-family="Liberation Sans" font-weight="bold">W</text></svg><div style="position:absolute;left:492px;top:574px;width:28px;height:2px;background:#1a78c8;"></div><svg style="position:absolute;left:711px;top:554px;" width="20" height="16" viewBox="0 0 20 16"><path d="M1 6 H14 M1 9 H16 M1 12 H12" stroke="#4a7ab8" stroke-width="1.3"/><path d="M12 12 C16 12 16 15 13 15" fill="none" stroke="#4a7ab8" stroke-width="1.1"/><circle cx="14.5" cy="4.5" r="3.7" fill="#d83030"/><text x="14.5" y="6.7" font-size="5.5" fill="#fff" text-anchor="middle" font-family="Liberation Sans" font-weight="bold">1</text></svg><div style="position:absolute;left:734.00px;top:557.71px;font-size:10.5px;line-height:1;color:#1a1a1a;white-space:nowrap;transform-origin:0 0;transform:scaleX(0.903);">11°C&nbsp; Venteux</div><svg style="position:absolute;left:800px;top:559px;" width="4" height="6" viewBox="0 0 4 6"><path d="M0 0 L4 3 L0 6 Z" fill="#2a7ad0"/></svg><svg style="position:absolute;left:810px;top:555px;" width="10" height="14" viewBox="0 0 10 14"><rect x="2" y="4" width="5" height="9" fill="none" stroke="#333" stroke-width="0.9"/><rect x="3" y="1" width="3" height="3" fill="none" stroke="#333" stroke-width="0.8"/></svg><svg style="position:absolute;left:823px;top:554px;" width="14" height="15" viewBox="0 0 14 15"><path d="M7 1 L12.5 3 V8 C12.5 11 10 13 7 14 C4 13 1.5 11 1.5 8 V3 Z" fill="none" stroke="#333" stroke-width="1"/><path d="M7 1 V14 M1.5 7 H12.5" stroke="#333" stroke-width="0.7"/><path d="M9 9 L12 14 H6 Z" fill="#f0c020"/></svg><svg style="position:absolute;left:840px;top:555px;" width="12" height="14" viewBox="0 0 12 14"><rect x="2" y="3" width="8" height="6" fill="none" stroke="#333" stroke-width="0.9"/><path d="M4 9 V12 H8 V9 M10 5 L12 4 V8 L10 7" fill="none" stroke="#333" stroke-width="0.8"/></svg><svg style="position:absolute;left:854px;top:555px;" width="15" height="14" viewBox="0 0 15 14"><rect x="1" y="2" width="12" height="9" fill="none" stroke="#333" stroke-width="1"/><path d="M4 10 L9 4" stroke="#333" stroke-width="0.8"/><circle cx="11.5" cy="10.5" r="2.6" fill="#2a7ad0"/></svg><svg style="position:absolute;left:871px;top:555px;" width="14" height="14" viewBox="0 0 14 14"><path d="M1 5 H4 L7 2 V12 L4 9 H1 Z" fill="none" stroke="#333" stroke-width="0.9"/><path d="M9 5 C10 6 10 8 9 9 M11 3.5 C13 5.5 13 8.5 11 10.5" fill="none" stroke="#555" stroke-width="0.8"/></svg><svg style="position:absolute;left:890px;top:554px;" width="14" height="15" viewBox="0 0 14 15"><path d="M2 13 C3 9 6 6 9 3 C10 2 12 3 11 4.5 C8 8 5 11 2 13 Z M5 9 C7 11 9 10 12 8" fill="none" stroke="#222" stroke-width="1.1"/></svg><div style="position:absolute;left:921.25px;top:550.87px;font-size:9.6px;line-height:1;color:#1a1a1a;white-space:nowrap;transform-origin:0 0;transform:scaleX(0.895);">16:22</div><div style="position:absolute;left:911.50px;top:563.87px;font-size:9.6px;line-height:1;color:#1a1a1a;white-space:nowrap;transform-origin:0 0;transform:scaleX(0.853);">08/12/2024</div><svg style="position:absolute;left:964px;top:555px;" width="16" height="15" viewBox="0 0 16 15"><rect x="1" y="1" width="14" height="10" fill="#111" rx="1"/><path d="M4 4 C6 4 10 8 12 8 C13 8 13 4 12 4 C10 4 6 8 4 8 C3 8 3 4 4 4 Z" fill="none" stroke="#fff" stroke-width="1"/><rect x="0" y="12.5" width="16" height="1.2" fill="#111"/></svg><svg style="position:absolute;left:994px;top:554px;" width="16" height="16" viewBox="0 0 16 16"><path d="M1.5 1.5 H14.5 V11.5 H9 L7 14 L6 11.5 H1.5 Z" fill="none" stroke="#222" stroke-width="1"/></svg><div style="position:absolute;left:879.5px;top:286px;width:1.5px;height:12px;background:transparent;background-image:repeating-linear-gradient(#6a6a6a 0 1px,transparent 1px 2px)"></div><div style="position:absolute;left:124.5px;top:284px;width:1.5px;height:12px;background:transparent;background-image:repeating-linear-gradient(#6a6a6a 0 1px,transparent 1px 2px)"></div>
</body></html>
